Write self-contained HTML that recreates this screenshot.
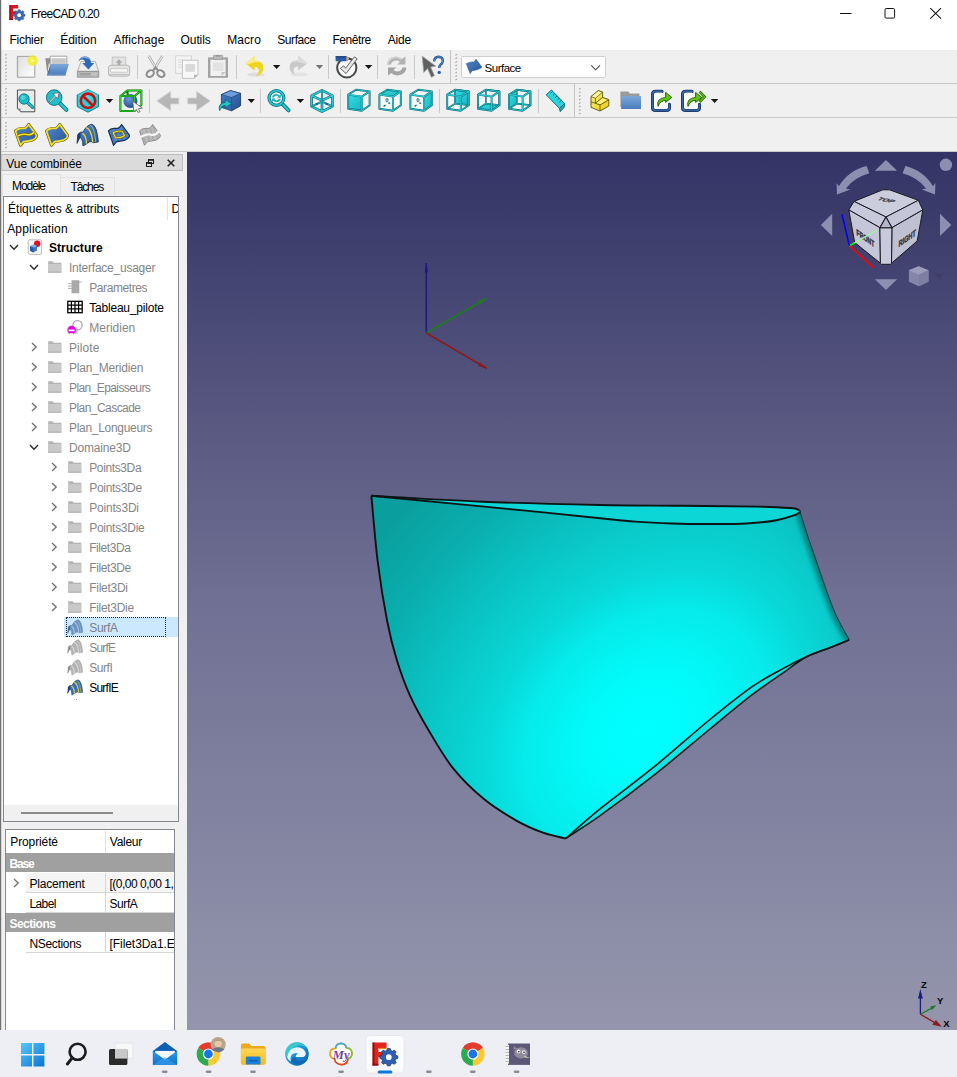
<!DOCTYPE html>
<html lang="fr">
<head>
<meta charset="utf-8">
<title>FreeCAD 0.20</title>
<style>
html,body{margin:0;padding:0;}
body{width:957px;height:1077px;overflow:hidden;position:relative;background:#f0f0f0;
 font-family:"Liberation Sans",sans-serif;font-size:12px;color:#000;}
.abs{position:absolute;}
.t{position:absolute;white-space:nowrap;line-height:14px;}
#title{left:0;top:0;width:957px;height:28px;background:#fff;}
#menu{left:0;top:28px;width:957px;height:22px;background:#fff;}

.hline{position:absolute;left:1px;width:956px;height:1px;background:#c9c9c9;}
.vsep{position:absolute;width:1px;background:#c6c6c6;}
.handle{position:absolute;width:2px;height:20px;
 background:repeating-linear-gradient(to bottom,#b0b0b0 0,#b0b0b0 1px,transparent 1px,transparent 3px);}
.ic{position:absolute;width:24px;height:24px;overflow:visible;}
.dd{position:absolute;width:0;height:0;border-left:3.5px solid transparent;border-right:3.5px solid transparent;border-top:4px solid #1a1a1a;}
#left{left:1px;top:152px;width:186px;height:878px;background:#f0f0f0;}
#view{left:187px;top:152px;width:770px;height:878px;background:linear-gradient(to bottom,#333365 0%,#6f6f93 50%,#9596ad 100%);}
#task{left:0;top:1030px;width:957px;height:47px;background:#eeeff5;}
.row{position:absolute;left:0;height:20px;white-space:nowrap;line-height:20px;font-size:12.2px;}
.g{color:#848484;}
.b{font-weight:bold;}
</style>
</head>
<body>
<!-- TITLE -->
<div id="title" class="abs">
<svg class="abs" style="left:8px;top:4px" width="18" height="18" viewBox="0 0 18 18"><path d="M1.4 1H10.2V4.4H5V7.2H8.6V10.4H5V16H1.4z" fill="#d8181c"/><path d="M1.4 1H2.6V16H1.4z" fill="#8c0c10"/><path d="M1.4 14.8H5V16H1.4z" fill="#8c0c10"/><g transform="translate(11.2 10.8)"><path d="M-1 -5.6H1L1.4 -4.2L2.6 -3.7L3.9 -4.5L5.2 -3.2L4.4 -1.9L4.9 -0.8L6.3 -0.4V1.4L4.9 1.8L4.4 3L5.2 4.2L3.9 5.5L2.6 4.8L1.4 5.3L1 6.6H-1L-1.4 5.3L-2.6 4.8L-3.9 5.5L-5.2 4.2L-4.4 3L-4.9 1.8L-6.3 1.4V-0.4L-4.9 -0.8L-4.4 -1.9L-5.2 -3.2L-3.9 -4.5L-2.6 -3.7L-1.4 -4.2z" fill="#3c6cb4" stroke="#1d3f78" stroke-width="0.5" transform="scale(0.92)"/><circle cx="0" cy="0.4" r="1.9" fill="#fff"/></g></svg>
<div class="t" style="left:30.7px;top:7.0px;font-size:12px;letter-spacing:-0.70px;">FreeCAD 0.20</div>
<svg class="abs" style="left:830px;top:0" width="127" height="28" viewBox="830 0 127 28"><path d="M840 13.5H851.5" stroke="#111" stroke-width="1"/><rect x="885" y="8.5" width="9.6" height="9.6" rx="1.2" fill="none" stroke="#111" stroke-width="1"/><path d="M930.3 8.2L941 18.6M941 8.2L930.3 18.6" stroke="#111" stroke-width="1.05"/></svg>
</div>
<div id="menu" class="abs">
<div class="t" style="left:9.5px;top:5.0px;font-size:12px;letter-spacing:-0.27px;">Fichier</div>
<div class="t" style="left:60.2px;top:5.0px;font-size:12px;letter-spacing:-0.05px;">Édition</div>
<div class="t" style="left:113.4px;top:5.0px;font-size:12px;letter-spacing:0.14px;">Affichage</div>
<div class="t" style="left:180.6px;top:5.0px;font-size:12px;letter-spacing:-0.11px;">Outils</div>
<div class="t" style="left:227.2px;top:5.0px;font-size:12px;letter-spacing:0.07px;">Macro</div>
<div class="t" style="left:277.3px;top:5.0px;font-size:12px;letter-spacing:-0.44px;">Surface</div>
<div class="t" style="left:332.5px;top:5.0px;font-size:12px;letter-spacing:-0.46px;">Fenêtre</div>
<div class="t" style="left:387.7px;top:5.0px;font-size:12px;letter-spacing:-0.17px;">Aide</div>
</div>
<!-- TOOLBARS -->
<div id="tb" class="abs" style="left:0;top:50px;width:957px;height:102px;">
 <div class="hline" style="top:33px;"></div>
 <div class="hline" style="top:67px;"></div>
 <div class="hline" style="top:101px;"></div>
<!--TB-ICONS-->
<svg class="abs" style="left:0;top:0;" width="957" height="102" viewBox="0 50 957 102"><defs>
<linearGradient id="pg" x1="0" y1="0" x2="1" y2="1"><stop offset="0" stop-color="#dedede"/><stop offset="1" stop-color="#ffffff"/></linearGradient>
<radialGradient id="yg"><stop offset="0" stop-color="#fffff0"/><stop offset="0.28" stop-color="#f8f330"/><stop offset="0.68" stop-color="#f2ec30" stop-opacity="0.85"/><stop offset="1" stop-color="#f0ea30" stop-opacity="0"/></radialGradient>
<linearGradient id="bf" x1="0" y1="0" x2="0" y2="1"><stop offset="0" stop-color="#7da7d9"/><stop offset="1" stop-color="#4a7fc0"/></linearGradient>
<linearGradient id="flag" x1="0" y1="0" x2="1" y2="1"><stop offset="0" stop-color="#4f86c9"/><stop offset="1" stop-color="#2a5596"/></linearGradient>
<linearGradient id="teal" x1="0" y1="0" x2="1" y2="1"><stop offset="0" stop-color="#35dde3"/><stop offset="1" stop-color="#17b4bf"/></linearGradient>
<linearGradient id="yel" x1="0" y1="0" x2="1" y2="1"><stop offset="0" stop-color="#fbf07a"/><stop offset="1" stop-color="#e6cc10"/></linearGradient>
<radialGradient id="sph" cx="0.4" cy="0.35" r="0.7"><stop offset="0" stop-color="#6a9ad8"/><stop offset="1" stop-color="#1f4a8c"/></radialGradient>
<linearGradient id="bcube" x1="0" y1="0" x2="1" y2="1"><stop offset="0" stop-color="#4d86cc"/><stop offset="1" stop-color="#234f90"/></linearGradient>
</defs>
<path d="M5.3 55.4l1.4 -1.2" stroke="#a3a3a3" stroke-width="1.1"/><path d="M5.3 58.9l1.4 -1.2" stroke="#a3a3a3" stroke-width="1.1"/><path d="M5.3 62.5l1.4 -1.2" stroke="#a3a3a3" stroke-width="1.1"/><path d="M5.3 66.0l1.4 -1.2" stroke="#a3a3a3" stroke-width="1.1"/><path d="M5.3 69.6l1.4 -1.2" stroke="#a3a3a3" stroke-width="1.1"/><path d="M5.3 73.1l1.4 -1.2" stroke="#a3a3a3" stroke-width="1.1"/><path d="M5.3 76.7l1.4 -1.2" stroke="#a3a3a3" stroke-width="1.1"/><path d="M5.3 80.2l1.4 -1.2" stroke="#a3a3a3" stroke-width="1.1"/>
<path d="M5.3 89.4l1.4 -1.2" stroke="#a3a3a3" stroke-width="1.1"/><path d="M5.3 92.9l1.4 -1.2" stroke="#a3a3a3" stroke-width="1.1"/><path d="M5.3 96.5l1.4 -1.2" stroke="#a3a3a3" stroke-width="1.1"/><path d="M5.3 100.0l1.4 -1.2" stroke="#a3a3a3" stroke-width="1.1"/><path d="M5.3 103.6l1.4 -1.2" stroke="#a3a3a3" stroke-width="1.1"/><path d="M5.3 107.1l1.4 -1.2" stroke="#a3a3a3" stroke-width="1.1"/><path d="M5.3 110.7l1.4 -1.2" stroke="#a3a3a3" stroke-width="1.1"/><path d="M5.3 114.2l1.4 -1.2" stroke="#a3a3a3" stroke-width="1.1"/>
<path d="M5.3 123.4l1.4 -1.2" stroke="#a3a3a3" stroke-width="1.1"/><path d="M5.3 126.9l1.4 -1.2" stroke="#a3a3a3" stroke-width="1.1"/><path d="M5.3 130.5l1.4 -1.2" stroke="#a3a3a3" stroke-width="1.1"/><path d="M5.3 134.1l1.4 -1.2" stroke="#a3a3a3" stroke-width="1.1"/><path d="M5.3 137.6l1.4 -1.2" stroke="#a3a3a3" stroke-width="1.1"/><path d="M5.3 141.2l1.4 -1.2" stroke="#a3a3a3" stroke-width="1.1"/><path d="M5.3 144.7l1.4 -1.2" stroke="#a3a3a3" stroke-width="1.1"/><path d="M5.3 148.2l1.4 -1.2" stroke="#a3a3a3" stroke-width="1.1"/>
<path d="M455.5 55.4l1.4 -1.2" stroke="#a3a3a3" stroke-width="1.1"/><path d="M455.5 58.9l1.4 -1.2" stroke="#a3a3a3" stroke-width="1.1"/><path d="M455.5 62.5l1.4 -1.2" stroke="#a3a3a3" stroke-width="1.1"/><path d="M455.5 66.0l1.4 -1.2" stroke="#a3a3a3" stroke-width="1.1"/><path d="M455.5 69.6l1.4 -1.2" stroke="#a3a3a3" stroke-width="1.1"/><path d="M455.5 73.1l1.4 -1.2" stroke="#a3a3a3" stroke-width="1.1"/><path d="M455.5 76.7l1.4 -1.2" stroke="#a3a3a3" stroke-width="1.1"/><path d="M455.5 80.2l1.4 -1.2" stroke="#a3a3a3" stroke-width="1.1"/>
<path d="M579.1 89.4l1.4 -1.2" stroke="#a3a3a3" stroke-width="1.1"/><path d="M579.1 92.9l1.4 -1.2" stroke="#a3a3a3" stroke-width="1.1"/><path d="M579.1 96.5l1.4 -1.2" stroke="#a3a3a3" stroke-width="1.1"/><path d="M579.1 100.0l1.4 -1.2" stroke="#a3a3a3" stroke-width="1.1"/><path d="M579.1 103.6l1.4 -1.2" stroke="#a3a3a3" stroke-width="1.1"/><path d="M579.1 107.1l1.4 -1.2" stroke="#a3a3a3" stroke-width="1.1"/><path d="M579.1 110.7l1.4 -1.2" stroke="#a3a3a3" stroke-width="1.1"/><path d="M579.1 114.2l1.4 -1.2" stroke="#a3a3a3" stroke-width="1.1"/>
<path d="M450.5 50.0V83.0" stroke="#c4c4c4" stroke-width="1"/>
<path d="M574.5 84.0V117.0" stroke="#c4c4c4" stroke-width="1"/>
<path d="M137.5 55.0V79.0" stroke="#c9c9c9" stroke-width="1"/>
<path d="M236.5 55.0V79.0" stroke="#c9c9c9" stroke-width="1"/>
<path d="M328.5 55.0V79.0" stroke="#c9c9c9" stroke-width="1"/>
<path d="M377.5 55.0V79.0" stroke="#c9c9c9" stroke-width="1"/>
<path d="M414.5 55.0V79.0" stroke="#c9c9c9" stroke-width="1"/>
<path d="M149.5 89.0V113.0" stroke="#c9c9c9" stroke-width="1"/>
<path d="M260.5 89.0V113.0" stroke="#c9c9c9" stroke-width="1"/>
<path d="M340.5 89.0V113.0" stroke="#c9c9c9" stroke-width="1"/>
<path d="M439.5 89.0V113.0" stroke="#c9c9c9" stroke-width="1"/>
<path d="M538.5 89.0V113.0" stroke="#c9c9c9" stroke-width="1"/>
<g transform="translate(15.0 55.0)" ><path d="M2 2.2H19.9V22.6H2z" fill="#8d8d8d" opacity="0.35"/><path d="M2.3 1.4H19.8V22.2H2.3z" fill="url(#pg)" stroke="#9b9b9b" stroke-width="0.9"/><path d="M3.8 3V21" stroke="#d5d5d5" stroke-width="0.6"/><circle cx="17.4" cy="5.6" r="6.2" fill="url(#yg)"/></g>
<g transform="translate(45.0 55.0)" ><path d="M0.4 3.2h4.6l1 1.4h9v4H3.8L2.4 19.6z" fill="#8e8e8e"/><path d="M5.2 1.2H21.8V12H5.2z" fill="#fff" stroke="#8d8d8d" stroke-width="0.8"/><path d="M6.4 3.2H20.8V9H6.4z" fill="#c8c8c8"/><path d="M5.9 9H23.9L20.6 19.7H2.1z" fill="url(#bf)"/><path d="M2.1 19.7H20.6L20.8 20.4H2z" fill="#2d5a9a"/><path d="M2.4 19.6L5.6 9.6 4.6 16z" fill="#555"/></g>
<g transform="translate(77.0 55.0)" ><path d="M4.2 6.4H18.2L21.8 16.4H0.4z" fill="#ececec" stroke="#a2a2a2" stroke-width="0.8"/><path d="M0.4 16.4H21.8V22.2H0.4z" fill="#b9b9b9" stroke="#8c8c8c" stroke-width="0.8"/><path d="M2.6 18h11.2v2.4H2.6z" fill="#a2a2a2"/><path d="M15 18v2.6M16.8 18v2.6M18.6 18v2.6" stroke="#cfcfcf" stroke-width="0.8"/><path d="M1.4 6.6Q2.6 1.4 8.4 1.4Q13.6 1.8 14.2 8H17.2L11.4 14.6L5.2 8H8.2Q8 5 5.2 4.6Q2.8 4.6 1.4 6.6z" fill="#2f68b4"/><path d="M1.4 6.6Q2.6 1.4 8.4 1.4Q12 1.8 13.4 5Q10 2.4 6 3Q3 3.6 1.4 6.6z" fill="#7fa8dc"/></g>
<g transform="translate(108.0 55.0)" ><path d="M4.2 2H17.8V11H4.2z" fill="#e2e2e2" stroke="#bdbdbd" stroke-width="0.8"/><path d="M11 4.2L14.2 7.4H12.4V10.4H9.6V7.4H7.8z" fill="#a8a8a8"/><rect x="0.5" y="10.2" width="21.2" height="11" rx="2.6" fill="#e4e4e2" stroke="#b2b2b2" stroke-width="0.9"/><path d="M2.6 13.6H19.6V16.2Q19.6 17.2 18.6 17.2H3.6Q2.6 17.2 2.6 16.2z" fill="#f7f7f5" stroke="#bcbcbc" stroke-width="0.7"/><path d="M1.4 19.6H20.8" stroke="#c2c2c2" stroke-width="1.2"/></g>
<g transform="translate(144.0 55.0)" ><path d="M4.6 1L12.6 14M18.4 1L10.4 14" stroke="#a9a9a9" stroke-width="2.6" fill="none"/><path d="M4.6 1L12.6 14M18.4 1L10.4 14" stroke="#ececec" stroke-width="1.2" fill="none"/><ellipse cx="6.2" cy="18.6" rx="4" ry="3" transform="rotate(-35 6.2 18.6)" fill="none" stroke="#8e8e8e" stroke-width="2"/><ellipse cx="16.8" cy="18.6" rx="4" ry="3" transform="rotate(35 16.8 18.6)" fill="none" stroke="#8e8e8e" stroke-width="2"/><path d="M9 15.6L11.5 12.4L14 15.6" stroke="#8e8e8e" stroke-width="2" fill="none"/></g>
<g transform="translate(175.0 55.0)" ><path d="M0.6 0.8H16.4V18.4H0.6z" fill="#f4f4f4" stroke="#cdcdcd" stroke-width="0.8"/><path d="M3 5h5M3 7.4h5M3 9.8h5M3 12.2h5" stroke="#d6d6d6" stroke-width="0.8"/><path d="M7.4 5.2H23V19.8L19 23.4H7.4z" fill="#f8f8f8" stroke="#bdbdbd" stroke-width="0.9"/><path d="M10.4 9H20V16.8H10.4z" fill="#d9d9d9"/><path d="M23 19.8H19V23.4z" fill="#b5b5b5"/></g>
<g transform="translate(207.0 55.0)" ><path d="M1 2.4H21V22.8H1z" fill="#a3a3a3"/><path d="M3.4 4.6H18.6V21H3.4z" fill="#f1f1f1"/><path d="M6 7.4H16.4V16H6z" fill="#e2e2e2"/><path d="M6.6 0.4H15.6V4.6H6.6z" fill="#b9b9b9" stroke="#9b9b9b" stroke-width="0.7"/><path d="M9 0H13.4V1.6H9z" fill="#999"/><path d="M18.6 17H14.6V21z" fill="#c2c2c2"/></g>
<g transform="translate(245.0 55.0)" ><ellipse cx="11" cy="19.6" rx="9" ry="2" fill="#000" opacity="0.08"/><path d="M0.6 8.6L9.6 1V5.4Q18.6 5.6 18.4 13.4Q18 19 11 21.2Q14.8 17.6 13.6 14.2Q12.6 11.6 9.6 11.8V15.8z" fill="#eed51c"/><path d="M0.6 8.6L9.6 1V5.4Q14 5.4 16.4 7.6Q12 6.4 9 7.2L2.6 9.6z" fill="#f7ec8a"/></g>
<path d="M272.9 65.0h7.4l-3.7 4.1z" fill="#151515"/>
<g transform="translate(289.0 55.0)" ><ellipse cx="10" cy="19.6" rx="9" ry="2" fill="#000" opacity="0.05"/><path d="M18.2 8.2L9.2 0.8V5.2Q0.4 5.4 0.6 13Q1 18 6.4 19.6Q3.6 16.6 5 13.6Q6.2 11.4 9.2 11.6V15.6z" fill="#c9c9c9"/><path d="M18.2 8.2L9.2 0.8V5.2Q5 5.2 2.6 7.6Q7 6.2 10 7L16.4 9.2z" fill="#dcdcdc"/></g>
<path d="M315.8 65.0h7.4l-3.7 4.1z" fill="#757575"/>
<g transform="translate(335.0 55.0)" ><circle cx="11.8" cy="12.8" r="9.6" fill="#fafafa" stroke="#454949" stroke-width="2"/><path d="M5.4 13.4L8.6 10.8L10.6 13.2L19.4 1.8L22.2 3.8L11 18.6z" fill="#e6e6e6" stroke="#555" stroke-width="0.9"/><path d="M0.6 1.2H11.4L15.4 3.6L11.4 6.2H0.6z" fill="#2a5fa5"/><path d="M0.6 1.2H11.4V2.6H0.6z" fill="#1b3f78"/><path d="M11.4 1.2L15.4 3.6L11.4 6.2z" fill="#c9a77a"/><path d="M14 2.8L15.6 3.6L14 4.6z" fill="#222"/></g>
<path d="M364.9 65.0h7.4l-3.7 4.1z" fill="#151515"/>
<g transform="translate(386.0 55.0)" ><path d="M1 9.6Q1.6 2 10 1.6Q14 1.8 16 4L19.4 1.4V9.6H11L14 7Q12.6 5.6 10 5.6Q5.4 6 5 9.6z" fill="#b3b3b3"/><path d="M20.4 12.4Q19.8 20 11.4 20.4Q7.4 20.2 5.4 18L2 20.6V12.4H10.4L7.4 15Q8.8 16.4 11.4 16.4Q16 16 16.4 12.4z" fill="#a4a4a4"/><path d="M1 9.6Q1.6 2 10 1.6Q14 1.8 16 4L15 4.8Q12.6 3 10 3Q3.6 3.4 2.4 9.6z" fill="#d5d5d5"/></g>
<g transform="translate(421.0 55.0)" ><path d="M1.2 1.2L14.8 11.2L9.6 12L13.4 20.6L10.4 22.2L6.6 13.6L2.8 17.4z" fill="#5e615f" stroke="#9a9d9a" stroke-width="0.8"/><path d="M13.2 6.4Q13.4 2 17.6 1.8Q21.8 2 21.8 5.8Q21.8 8.2 19.4 9.8Q18.2 10.8 18.2 13" fill="none" stroke="#1d4f94" stroke-width="2.4"/><path d="M13.2 6.4Q13.4 2 17.6 1.8Q21.8 2 21.8 5.8Q21.8 8.2 19.4 9.8Q18.2 10.8 18.2 13" fill="none" stroke="#5b8ed0" stroke-width="1"/><circle cx="18.2" cy="17.4" r="1.7" fill="#2a5fa5"/></g>
<rect x="461.5" y="56.5" width="144" height="21" rx="1" fill="#fff" stroke="#cfcfcf" stroke-width="1"/>
<g transform="translate(466.0 58.0)" ><path d="M0.4 6Q4 3.6 8.6 4.2L10.6 1.2L16.8 9.8Q13 13 6.4 13.4L4.4 16.4z" fill="url(#flag)" stroke="#27508e" stroke-width="0.6" transform="scale(0.95)"/></g>
<path d="M591.2 65.4L595.6 69.8L600 65.4" fill="none" stroke="#444" stroke-width="1.1"/>
<g transform="translate(15.0 89.0)" ><path d="M2.4 1H19.8V22.8H5.6L2.4 19.6z" fill="#e9ece6" stroke="#3c3c3c" stroke-width="0.9"/><path d="M2.4 19.6H5.6V22.8z" fill="#8c8c8c"/><path d="M11 12L17.6 18.4" stroke="#0b6a75" stroke-width="3.2" stroke-linecap="round"/><path d="M11 12L17.6 18.4" stroke="#25c3cd" stroke-width="1.8" stroke-linecap="round"/><circle cx="9" cy="10" r="5.2" fill="#1fb9c4" stroke="#0b6a75" stroke-width="0.8"/><circle cx="8" cy="8.6" r="2.4" fill="#5fe0e6" opacity="0.7"/></g>
<g transform="translate(45.0 89.0)" ><path d="M14.6 14L21.4 20.8" stroke="#0b6a75" stroke-width="4" stroke-linecap="round"/><path d="M14.6 14L21.4 20.8" stroke="#27c7d1" stroke-width="2.4" stroke-linecap="round"/><circle cx="9.2" cy="8.6" r="7.8" fill="#21c1cb" stroke="#0b6a75" stroke-width="0.9"/><path d="M4.4 12.2L10 6.6L8 4.6L14 3.6L13 9.6L11 7.6L5.4 13.2z" fill="#f4f4f4" stroke="#555" stroke-width="0.7"/></g>
<g transform="translate(76.0 89.0)" ><path d="M12 0.6L22.6 6V17.6L12 23.2L1.2 17.6V6z" fill="#2bcfd8" stroke="#0b6a75" stroke-width="0.9"/><path d="M12 0.6L22.6 6L12 11.6L1.2 6z" fill="#4fe2e8" opacity="0.6"/><circle cx="12" cy="11.8" r="7.2" fill="none" stroke="#c90f0f" stroke-width="2.6"/><path d="M6.8 6.8L17.2 17" stroke="#c90f0f" stroke-width="2.6"/></g>
<path d="M105.8 99.0h7.4l-3.7 4.1z" fill="#151515"/>
<g transform="translate(119.0 89.0)" ><circle cx="11.4" cy="12" r="7" fill="url(#sph)"/><path d="M1.4 7H15.6V22H1.4zM1.4 7L8.6 1.4H22.4L15.6 7M22.4 1.4V16L15.6 22M8.6 1.4V7" fill="none" stroke="#0b7a0b" stroke-width="2.0" stroke-linejoin="round"/><path d="M1.4 7H15.6V22H1.4zM1.4 7L8.6 1.4H22.4L15.6 7M22.4 1.4V16L15.6 22" fill="none" stroke="#2ee02e" stroke-width="0.9" stroke-linejoin="round"/><path d="M13.8 13.4L23.4 20.4L19.4 20.8L21 24L19 24.6L17.4 21.6L14.8 24z" fill="#f2f2f2" stroke="#666" stroke-width="0.8" transform="translate(0 -1.2)"/></g>
<g transform="translate(156.0 89.0)" ><path d="M0.8 11.9L14.6 2.4V9.1H22.8V14.9H14.6V21.6z" fill="#b6b6b6" stroke="#cfcfcf" stroke-width="0.8"/></g>
<g transform="translate(187.0 89.0)" ><path d="M23.3 11.9L9.6 2.4V9.1H0.8V14.9H9.6V21.6z" fill="#b6b6b6" stroke="#cfcfcf" stroke-width="0.8"/></g>
<g transform="translate(218.0 89.0)" ><path d="M3.4 5.6L12.4 1.6L22.6 4.4V16.8L13.6 21.8L3.4 18.4z" fill="url(#bcube)" stroke="#16305c" stroke-width="0.8"/><path d="M3.4 5.6L12.4 1.6L22.6 4.4L13.6 8.6z" fill="#6d9fdc" stroke="#16305c" stroke-width="0.6"/><path d="M13.6 8.6V21.8" stroke="#16305c" stroke-width="0.6"/><path d="M3.4 5.6L13.6 8.6V21.8L3.4 18.4z" fill="#3a6fb5" opacity="0.6"/><path d="M1.6 21.6Q-0.4 14.6 7.2 13.2V10.4L13.6 14.6L7.2 19V16.2Q3.4 16.6 1.6 21.6z" fill="#25c3cd" stroke="#0b5a64" stroke-width="0.8"/></g>
<path d="M247.6 99.0h7.4l-3.7 4.1z" fill="#151515"/>
<g transform="translate(267.0 89.0)" ><path d="M15 14.6L21.6 21.4" stroke="#0b6a75" stroke-width="3.8" stroke-linecap="round"/><path d="M15 14.6L21.6 21.4" stroke="#27c7d1" stroke-width="2.2" stroke-linecap="round"/><circle cx="9.4" cy="9" r="7.4" fill="#f0f0f0" stroke="#0b6a75" stroke-width="3.2"/><circle cx="9.4" cy="9" r="7.4" fill="none" stroke="#27c7d1" stroke-width="1.8"/><path d="M5 8.4Q5.6 5 9.4 5Q11.4 5.2 12.4 6.4L13.8 5.2V8.8H10.2L11.4 7.6Q10.6 6.8 9.4 6.8Q7.2 7 6.8 8.4zM13.8 9.8Q13.2 13.2 9.4 13.2Q7.4 13 6.4 11.8L5 13V9.4H8.6L7.4 10.6Q8.2 11.4 9.4 11.4Q11.6 11.2 12 9.8z" fill="#1fb0bb"/></g>
<path d="M296.7 99.0h7.4l-3.7 4.1z" fill="#151515"/>
<g transform="translate(310.0 89.0)" ><path d="M12 1.4L22.4 6.6V17.4L12 22.6L1.6 17.4V6.6zM1.6 6.6L12 11.4L22.4 6.6M12 11.4V22.6" fill="none" stroke="#0b6a75" stroke-width="2.6" stroke-linejoin="round"/><path d="M12 1.4L22.4 6.6V17.4L12 22.6L1.6 17.4V6.6zM1.6 6.6L12 11.4L22.4 6.6M12 11.4V22.6" fill="none" stroke="#2bd0d9" stroke-width="1.3" stroke-linejoin="round"/><path d="M12 1.4V11.4M12 12.6L1.6 17.4M12 12.6L22.4 17.4" fill="none" stroke="#0b6a75" stroke-width="1.8" stroke-linejoin="round"/><path d="M12 1.4V11.4M12 12.6L1.6 17.4M12 12.6L22.4 17.4" fill="none" stroke="#2bd0d9" stroke-width="0.9" stroke-linejoin="round"/><path d="M5.6 15.6l2.4 -1M15.6 14.6l2.4 1" stroke="#0b6a75" stroke-width="1.6"/></g>
<g transform="translate(347.4 89.0)" ><path d="M0.8 5.6L8.6 0.8L22.2 2.4L22.2 16.2L14.4 21.8L0.8 19.8z" fill="#f7f7f7"/><path d="M0.8 5.6L14.4 7.6L14.4 21.8L0.8 19.8z" fill="url(#teal)"/><path d="M0.8 5.6L14.4 7.6L14.4 21.8L0.8 19.8z M0.8 5.6L8.6 0.8L22.2 2.4L14.4 7.6z M14.4 7.6L22.2 2.4L22.2 16.2L14.4 21.8z" fill="none" stroke="#0b6a75" stroke-width="1.9" stroke-linejoin="round"/><path d="M0.8 5.6L14.4 7.6L14.4 21.8L0.8 19.8z M0.8 5.6L8.6 0.8L22.2 2.4L14.4 7.6z M14.4 7.6L22.2 2.4L22.2 16.2L14.4 21.8z" fill="none" stroke="#2bd0d9" stroke-width="0.8" stroke-linejoin="round"/></g>
<g transform="translate(378.6 89.0)" ><path d="M0.8 5.6L8.6 0.8L22.2 2.4L22.2 16.2L14.4 21.8L0.8 19.8z" fill="#f7f7f7"/><path d="M0.8 5.6L8.6 0.8L22.2 2.4L14.4 7.6z" fill="url(#teal)"/><path d="M0.8 5.6L14.4 7.6L14.4 21.8L0.8 19.8z M0.8 5.6L8.6 0.8L22.2 2.4L14.4 7.6z M14.4 7.6L22.2 2.4L22.2 16.2L14.4 21.8z" fill="none" stroke="#0b6a75" stroke-width="1.9" stroke-linejoin="round"/><path d="M0.8 5.6L14.4 7.6L14.4 21.8L0.8 19.8z M0.8 5.6L8.6 0.8L22.2 2.4L14.4 7.6z M14.4 7.6L22.2 2.4L22.2 16.2L14.4 21.8z" fill="none" stroke="#2bd0d9" stroke-width="0.8" stroke-linejoin="round"/><ellipse cx="8.4" cy="11.2" rx="1" ry="1.8" fill="none" stroke="#0b6a75" stroke-width="0.9"/><path d="M5 17.4l2 -1.4M9.6 14.2h2" stroke="#0b6a75" stroke-width="1.3"/></g>
<g transform="translate(409.6 89.0)" ><path d="M0.8 5.6L8.6 0.8L22.2 2.4L22.2 16.2L14.4 21.8L0.8 19.8z" fill="#f7f7f7"/><path d="M14.4 7.6L22.2 2.4L22.2 16.2L14.4 21.8z" fill="url(#teal)"/><path d="M0.8 5.6L14.4 7.6L14.4 21.8L0.8 19.8z M0.8 5.6L8.6 0.8L22.2 2.4L14.4 7.6z M14.4 7.6L22.2 2.4L22.2 16.2L14.4 21.8z" fill="none" stroke="#0b6a75" stroke-width="1.9" stroke-linejoin="round"/><path d="M0.8 5.6L14.4 7.6L14.4 21.8L0.8 19.8z M0.8 5.6L8.6 0.8L22.2 2.4L14.4 7.6z M14.4 7.6L22.2 2.4L22.2 16.2L14.4 21.8z" fill="none" stroke="#2bd0d9" stroke-width="0.8" stroke-linejoin="round"/><ellipse cx="8.4" cy="11.2" rx="1" ry="1.8" fill="none" stroke="#0b6a75" stroke-width="0.9"/><path d="M5 17.4l2 -1.4M9.6 14.2h2" stroke="#0b6a75" stroke-width="1.3"/></g>
<g transform="translate(446.4 89.0)" ><path d="M0.8 5.6L8.6 0.8L22.2 2.4L22.2 16.2L14.4 21.8L0.8 19.8z" fill="#f7f7f7"/><path d="M8.6 0.8L22.2 2.4L22.2 16.2L8.6 14.6z" fill="url(#teal)"/><path d="M8.6 0.8L22.2 2.4L22.2 16.2L8.6 14.6z M0.8 19.8L8.6 14.6" fill="none" stroke="#0b6a75" stroke-width="1.7" stroke-linejoin="round"/><path d="M8.6 0.8L22.2 2.4L22.2 16.2L8.6 14.6z M0.8 19.8L8.6 14.6" fill="none" stroke="#2bd0d9" stroke-width="0.7" stroke-linejoin="round"/><path d="M0.8 5.6L14.4 7.6L14.4 21.8L0.8 19.8z M0.8 5.6L8.6 0.8L22.2 2.4L14.4 7.6z M14.4 7.6L22.2 2.4L22.2 16.2L14.4 21.8z" fill="none" stroke="#0b6a75" stroke-width="1.9" stroke-linejoin="round"/><path d="M0.8 5.6L14.4 7.6L14.4 21.8L0.8 19.8z M0.8 5.6L8.6 0.8L22.2 2.4L14.4 7.6z M14.4 7.6L22.2 2.4L22.2 16.2L14.4 21.8z" fill="none" stroke="#2bd0d9" stroke-width="0.8" stroke-linejoin="round"/></g>
<g transform="translate(477.2 89.0)" ><path d="M0.8 5.6L8.6 0.8L22.2 2.4L22.2 16.2L14.4 21.8L0.8 19.8z" fill="#f7f7f7"/><path d="M0.8 19.8L8.6 14.6L22.2 16.2L14.4 21.8z" fill="url(#teal)"/><path d="M8.6 0.8L22.2 2.4L22.2 16.2L8.6 14.6z M0.8 19.8L8.6 14.6" fill="none" stroke="#0b6a75" stroke-width="1.7" stroke-linejoin="round"/><path d="M8.6 0.8L22.2 2.4L22.2 16.2L8.6 14.6z M0.8 19.8L8.6 14.6" fill="none" stroke="#2bd0d9" stroke-width="0.7" stroke-linejoin="round"/><path d="M0.8 5.6L14.4 7.6L14.4 21.8L0.8 19.8z M0.8 5.6L8.6 0.8L22.2 2.4L14.4 7.6z M14.4 7.6L22.2 2.4L22.2 16.2L14.4 21.8z" fill="none" stroke="#0b6a75" stroke-width="1.9" stroke-linejoin="round"/><path d="M0.8 5.6L14.4 7.6L14.4 21.8L0.8 19.8z M0.8 5.6L8.6 0.8L22.2 2.4L14.4 7.6z M14.4 7.6L22.2 2.4L22.2 16.2L14.4 21.8z" fill="none" stroke="#2bd0d9" stroke-width="0.8" stroke-linejoin="round"/></g>
<g transform="translate(508.2 89.0)" ><path d="M0.8 5.6L8.6 0.8L22.2 2.4L22.2 16.2L14.4 21.8L0.8 19.8z" fill="#f7f7f7"/><path d="M0.8 5.6L8.6 0.8L8.6 14.6L0.8 19.8z" fill="url(#teal)"/><path d="M8.6 0.8L22.2 2.4L22.2 16.2L8.6 14.6z M0.8 19.8L8.6 14.6" fill="none" stroke="#0b6a75" stroke-width="1.7" stroke-linejoin="round"/><path d="M8.6 0.8L22.2 2.4L22.2 16.2L8.6 14.6z M0.8 19.8L8.6 14.6" fill="none" stroke="#2bd0d9" stroke-width="0.7" stroke-linejoin="round"/><path d="M0.8 5.6L14.4 7.6L14.4 21.8L0.8 19.8z M0.8 5.6L8.6 0.8L22.2 2.4L14.4 7.6z M14.4 7.6L22.2 2.4L22.2 16.2L14.4 21.8z" fill="none" stroke="#0b6a75" stroke-width="1.9" stroke-linejoin="round"/><path d="M0.8 5.6L14.4 7.6L14.4 21.8L0.8 19.8z M0.8 5.6L8.6 0.8L22.2 2.4L14.4 7.6z M14.4 7.6L22.2 2.4L22.2 16.2L14.4 21.8z" fill="none" stroke="#2bd0d9" stroke-width="0.8" stroke-linejoin="round"/></g>
<g transform="translate(545.0 89.0)" ><path d="M1.2 5.8L6.4 1L19.6 14.6L14.4 19.4z" fill="#2bd3db" stroke="#0b6a75" stroke-width="0.9"/><path d="M14.4 19.4L19.6 14.6V17.8L15.2 22.8z" fill="#19a9b4" stroke="#0b6a75" stroke-width="0.8"/><path d="M7.6 2.4l-2 1.9M9.8 4.6l-1.6 1.5M12 6.9l-2 1.9M14.2 9.2l-1.6 1.5M16.4 11.4l-2 1.9" stroke="#0b5a64" stroke-width="0.9"/></g>
<g transform="translate(590.0 89.0)" ><path d="M1 7.6L8.4 1.6L12.6 3.2V8.6L18.8 10.8V17L10 22L1 18.4z" fill="url(#yel)" stroke="#5e5204" stroke-width="0.9" stroke-linejoin="round"/><path d="M1 7.6L8.4 1.6L12.6 3.2L5.4 9.2z" fill="#fdf6a0" stroke="#5e5204" stroke-width="0.7"/><path d="M5.4 9.2V14.2L10 15.8L18.8 10.8L12.6 8.6L5.4 14.2M1 13L5.4 14.2M10 15.8V22" fill="none" stroke="#5e5204" stroke-width="0.8"/><path d="M5.4 14.2L12.6 8.6L18.8 10.8L10 15.8z" fill="#fbf07a" stroke="#5e5204" stroke-width="0.7"/></g>
<g transform="translate(620.0 89.0)" ><path d="M0.4 2.4H8.4L9.8 4.4H19.4V18H0.4z" fill="#9a9a9a"/><path d="M1.2 7H21V19.6H1.2z" fill="url(#bf)"/><path d="M1.2 19H21V19.8H1.2z" fill="#3f6fb0"/></g>
<g transform="translate(651.0 89.0)" ><path d="M11 2.4H4.6Q1.6 2.4 1.6 5.4V18.4Q1.6 21.4 4.6 21.4H15.4Q18.4 21.4 18.4 18.4V15.4" fill="none" stroke="#16305c" stroke-width="3.2" stroke-linecap="round"/><path d="M11 3.6H5Q3 3.6 3 5.6V18.2Q3 20 5 20H15Q17 20 17 18.2V15.4z" fill="#fbfbfb"/><path d="M11 2.4H4.6Q1.6 2.4 1.6 5.4V18.4Q1.6 21.4 4.6 21.4H15.4Q18.4 21.4 18.4 18.4V15.4" fill="none" stroke="#3465a4" stroke-width="1.7" stroke-linecap="round"/><path d="M7 17.4Q5 9.4 14.6 8.4V3.4L20.8 8.4L14.6 13.4V11.4Q9.4 11.4 7 17.4z" fill="#63c312" stroke="#1e5a06" stroke-width="0.9" stroke-linejoin="round"/></g>
<g transform="translate(681.0 89.0)" ><path d="M11 2.4H4.6Q1.6 2.4 1.6 5.4V18.4Q1.6 21.4 4.6 21.4H15.4Q18.4 21.4 18.4 18.4V15.4" fill="none" stroke="#16305c" stroke-width="3.2" stroke-linecap="round"/><path d="M11 3.6H5Q3 3.6 3 5.6V18.2Q3 20 5 20H15Q17 20 17 18.2V15.4z" fill="#fbfbfb"/><path d="M11 2.4H4.6Q1.6 2.4 1.6 5.4V18.4Q1.6 21.4 4.6 21.4H15.4Q18.4 21.4 18.4 18.4V15.4" fill="none" stroke="#3465a4" stroke-width="1.7" stroke-linecap="round"/><path d="M7 17.4Q5 9.4 14.6 8.4V3.4L20.8 8.4L14.6 13.4V11.4Q9.4 11.4 7 17.4z" fill="#63c312" stroke="#1e5a06" stroke-width="0.9" stroke-linejoin="round"/><path d="M18.6 2.6L23.6 7.8L18.6 13" fill="none" stroke="#1e5a06" stroke-width="2.6"/><path d="M18.6 2.6L23.6 7.8L18.6 13" fill="none" stroke="#63c312" stroke-width="1.3"/></g>
<path d="M710.9 99.0h7.4l-3.7 4.1z" fill="#151515"/>
<g transform="translate(15.0 123.0)" ><path d="M0.5 8Q2.5 5.6 6 5.4L10 5.4Q12.4 4.4 13.6 1.5L21.4 12.2Q22 14.8 17.1 17.1Q12 18.2 8.5 18.6L5.5 22.3z" fill="url(#flag)" stroke="#6b5f06" stroke-width="3" stroke-linejoin="round"/><path d="M0.5 8Q2.5 5.6 6 5.4L10 5.4Q12.4 4.4 13.6 1.5L21.4 12.2Q22 14.8 17.1 17.1Q12 18.2 8.5 18.6L5.5 22.3z" fill="url(#flag)" stroke="#f6e22a" stroke-width="1.6" stroke-linejoin="round"/><path d="M2.4 13.2Q7 10.4 12 11.6Q16.6 12.6 19 9" fill="none" stroke="#6b5f06" stroke-width="2.8"/><path d="M2.4 13.2Q7 10.4 12 11.6Q16.6 12.6 19 9" fill="none" stroke="#f6e22a" stroke-width="1.5"/></g>
<g transform="translate(46.0 123.0)" ><path d="M0.5 8Q2.5 5.6 6 5.4L10 5.4Q12.4 4.4 13.6 1.5L21.4 12.2Q22 14.8 17.1 17.1Q12 18.2 8.5 18.6L5.5 22.3z" fill="url(#flag)" stroke="#6b5f06" stroke-width="3" stroke-linejoin="round"/><path d="M0.5 8Q2.5 5.6 6 5.4L10 5.4Q12.4 4.4 13.6 1.5L21.4 12.2Q22 14.8 17.1 17.1Q12 18.2 8.5 18.6L5.5 22.3z" fill="url(#flag)" stroke="#f6e22a" stroke-width="1.6" stroke-linejoin="round"/></g>
<g transform="translate(76.0 123.0)" ><path d="M1 20.4L1.8 11.4Q4.6 8 7 9.2Q10.4 2 15.8 1.2Q21 2.4 22.4 19L17 19.8Q15.6 18 13.4 19L7 23Q6.4 15.6 4.6 14.6Q3 15.6 1 20.4z" fill="url(#flag)" stroke="#16305c" stroke-width="0.8" stroke-linejoin="round"/><path d="M1 20.4L1.8 11.4Q3.4 9.6 4.6 9.4L4.6 14.6Q3 15.6 1 20.4z" fill="#1d3f78"/><path d="M6.4 10.4Q10 12 10.6 20.6M10.2 4.6Q15.4 6 16.8 19.4" fill="none" stroke="#f0dc3a" stroke-width="1.2"/><path d="M13.6 2Q18.6 4 19.8 19.2" fill="none" stroke="#f0dc3a" stroke-width="0.9" opacity="0.7"/></g>
<g transform="translate(108.0 123.0)" ><path d="M0.5 8Q2.5 5.6 6 5.4L10 5.4Q12.4 4.4 13.6 1.5L21.4 12.2Q22 14.8 17.1 17.1Q12 18.2 8.5 18.6L5.5 22.3z" fill="#5088cc" stroke="#16305c" stroke-width="1.2" stroke-linejoin="round"/><path d="M3 9L6.4 20M7 6L10.4 18.2M11.4 5.6L14.6 17.4M13.6 2L19 15.6M2 13.4Q8 9.6 19.6 10.4" stroke="#1d3f78" stroke-width="0.6" fill="none" opacity="0.55"/><path d="M5.2 9.8Q8.6 7.6 14 8.2L16.6 12.8Q13 15 7.6 15z" fill="none" stroke="#6b5f06" stroke-width="2.2" stroke-linejoin="round"/><path d="M5.2 9.8Q8.6 7.6 14 8.2L16.6 12.8Q13 15 7.6 15z" fill="none" stroke="#f6e22a" stroke-width="1.1" stroke-linejoin="round"/></g>
<g transform="translate(139.0 123.0)" ><path d="M0.5 8Q2.5 5.6 6 5.4L10 5.4Q12.4 4.4 13.6 1.5L21.4 12.2Q22 14.8 17.1 17.1Q12 18.2 8.5 18.6L5.5 22.3z" fill="#b9b9b9" stroke="#8f8f8f" stroke-width="1" stroke-linejoin="round"/><path d="M3 9L6.4 20M7 6L10.4 18.2M11.4 5.6L14.6 17.4M13.6 2L19 15.6" stroke="#9a9a9a" stroke-width="0.7" fill="none"/><path d="M1.6 14Q7 10.4 12 11.6Q17 12.6 19.6 8.4" fill="none" stroke="#f4f4f4" stroke-width="2.2"/></g></svg><div class="t" style="left:484.6px;top:11.1px;font-size:11.5px;letter-spacing:-0.51px;">Surface</div>
<!--/TB-ICONS-->
</div>
<!-- LEFT PANEL -->
<div id="left" class="abs">
<!--LEFT-->
<div class="abs" style="left:0.0px;top:2.0px;width:182.0px;height:17.0px;background:#dbdbdb;border:1px solid #bcbcbc;box-sizing:border-box;"></div>
<div class="t" style="left:5.3px;top:4.8px;font-size:12px;letter-spacing:-0.05px;">Vue combinée</div>
<svg class="abs" style="left:144.0px;top:6.0px;" width="10" height="10" viewBox="0 0 10 10"><path d="M3.5 1.5h5v4h-5z M1.5 4.5h5v4h-5z" fill="#dbdbdb" stroke="#222" stroke-width="1.1"/><path d="M3.5 2h5" stroke="#222" stroke-width="1.6"/><path d="M1.5 5h5" stroke="#222" stroke-width="1.6"/></svg>
<svg class="abs" style="left:165.0px;top:6.0px;" width="10" height="10" viewBox="0 0 10 10"><path d="M1.7 1.7L8.3 8.3M8.3 1.7L1.7 8.3" stroke="#222" stroke-width="1.6" fill="none"/></svg>
<div class="abs" style="left:1.0px;top:22.0px;width:59.0px;height:23.0px;background:#f3f3f3;border:1px solid #e2e2e2;border-bottom:none;box-sizing:border-box;"></div>
<div class="abs" style="left:60.0px;top:25.0px;width:54.0px;height:18.0px;background:#f0f0f0;border:1px solid #e2e2e2;border-left:none;border-bottom:none;box-sizing:border-box;"></div>
<div class="t" style="left:11.1px;top:26.6px;font-size:12px;letter-spacing:-1.09px;">Modèle</div>
<div class="t" style="left:69.5px;top:27.6px;font-size:12px;letter-spacing:-1.13px;">Tâches</div>
<div class="abs" style="left:2.0px;top:44.0px;width:176.0px;height:626.0px;background:#fff;border:1px solid #828790;box-sizing:border-box;"></div>
<div class="abs" style="left:165.5px;top:45.0px;width:1.0px;height:22.5px;background:#e2e2e2;"></div>
<div class="t" style="left:7.0px;top:49.8px;font-size:12px;letter-spacing:0.03px;">Étiquettes &amp; attributs</div>
<div class="t" style="left:170.4px;top:49.8px;font-size:12px;width:6.4px;overflow:hidden;">D</div>
<div class="t" style="left:6.2px;top:69.8px;font-size:12px;letter-spacing:0.17px;">Application</div>
<div class="abs" style="left:3.0px;top:653.0px;width:174.0px;height:16.0px;background:#f0f0f0;"></div>
<div class="abs" style="left:20.0px;top:660.0px;width:92.0px;height:2.0px;background:#8b8b8b;"></div>
<div class="abs" style="left:63.0px;top:465.0px;width:114.0px;height:20.0px;background:#cce8ff;"></div>
<div class="abs" style="left:65.0px;top:465.0px;width:100.0px;height:20.0px;border:1px dotted #222;box-sizing:border-box;"></div>
<svg class="abs" style="left:6.7px;top:90.3px;" width="12" height="10" viewBox="0 0 12 10"><path d="M2 3L6 7.2L10 3" fill="none" stroke="#262626" stroke-width="1.3"/></svg>
<svg class="abs" style="left:26.0px;top:87.0px;" width="16" height="16" viewBox="0 0 16 16"><rect x="1.2" y="0.8" width="13.4" height="14.6" rx="1.5" fill="#f6f6f6" stroke="#b5b5b5" stroke-width="0.9"/><circle cx="10.2" cy="4.8" r="3.2" fill="#e0101c"/><path d="M3 7.2L7 5.6l3 1.4v4.6L6.4 13.4 3 11.8z" fill="#3b78c2"/><path d="M3 7.2L6.4 8.8 10 7 7 5.6z" fill="#7fb0e8"/><path d="M6.4 8.8v4.6L3 11.8V7.2z" fill="#2a5a9a"/></svg>
<div class="t" style="left:47.9px;top:88.6px;font-size:12px;letter-spacing:0.06px;font-weight:bold;">Structure</div>
<svg class="abs" style="left:26.8px;top:110.3px;" width="12" height="10" viewBox="0 0 12 10"><path d="M2 3L6 7.2L10 3" fill="none" stroke="#262626" stroke-width="1.3"/></svg>
<svg class="abs" style="left:46.0px;top:107.0px;" width="16" height="16" viewBox="0 0 16 16"><path d="M1.2 2.2h4.3l1.2 1.6h7.6v9.8H1.2z" fill="#b3b3b3"/><path d="M1.2 5h13.1v8.6H1.2z" fill="#c9c9c9"/><path d="M1.2 12.6h13.1v1H1.2z" fill="#b0b0b0"/></svg>
<div class="t" style="left:68.0px;top:108.6px;font-size:12px;letter-spacing:-0.24px;color:#858585;">Interface_usager</div>
<svg class="abs" style="left:66.0px;top:127.0px;" width="16" height="16" viewBox="0 0 16 16"><path d="M4.5 1.2h7.8v1.3h2.2v1H12.3v10.8H4.5z" fill="#a9a9a9"/><path d="M1 4.6h3.5M1 7h3.5M1 9.4h3.5" stroke="#a9a9a9" stroke-width="1"/></svg>
<div class="t" style="left:88.2px;top:128.6px;font-size:12px;letter-spacing:-0.40px;color:#858585;">Parametres</div>
<svg class="abs" style="left:66.0px;top:148.0px;" width="16" height="14" viewBox="0 0 16 14"><rect x="0.8" y="1.3" width="14.4" height="11.4" fill="#fff" stroke="#000" stroke-width="1.3"/><path d="M0.8 5.1h14.4M0.8 8.9h14.4M4.4 1.3v11.4M8 1.3v11.4M11.6 1.3v11.4" stroke="#000" stroke-width="1.2"/></svg>
<div class="t" style="left:88.2px;top:148.6px;font-size:12px;letter-spacing:-0.20px;">Tableau_pilote</div>
<svg class="abs" style="left:65.0px;top:167.0px;" width="18" height="17" viewBox="0 0 18 17"><circle cx="11.5" cy="6.2" r="4.6" fill="none" stroke="#a8a8a8" stroke-width="1.3"/><path d="M6 8.5h5.5v6H6z" fill="#b5b5b5"/><circle cx="5.6" cy="11" r="4.3" fill="#dd0fdd"/><path d="M2.6 10.6h6v1.6h-6z" fill="#fff"/><path d="M4 14.2h3.2v1.4H4z" fill="#fff"/></svg>
<div class="t" style="left:88.2px;top:168.6px;font-size:12px;letter-spacing:0.01px;color:#858585;">Meridien</div>
<svg class="abs" style="left:28.2px;top:189.4px;" width="10" height="12" viewBox="0 0 10 12"><path d="M3 2L7.2 6L3 10" fill="none" stroke="#6e6e6e" stroke-width="1.3"/></svg>
<svg class="abs" style="left:46.0px;top:187.2px;" width="16" height="16" viewBox="0 0 16 16"><path d="M1.2 2.2h4.3l1.2 1.6h7.6v9.8H1.2z" fill="#b3b3b3"/><path d="M1.2 5h13.1v8.6H1.2z" fill="#c9c9c9"/><path d="M1.2 12.6h13.1v1H1.2z" fill="#b0b0b0"/></svg>
<div class="t" style="left:68.0px;top:188.6px;font-size:12px;letter-spacing:0.06px;color:#858585;">Pilote</div>
<svg class="abs" style="left:28.2px;top:209.4px;" width="10" height="12" viewBox="0 0 10 12"><path d="M3 2L7.2 6L3 10" fill="none" stroke="#6e6e6e" stroke-width="1.3"/></svg>
<svg class="abs" style="left:46.0px;top:207.2px;" width="16" height="16" viewBox="0 0 16 16"><path d="M1.2 2.2h4.3l1.2 1.6h7.6v9.8H1.2z" fill="#b3b3b3"/><path d="M1.2 5h13.1v8.6H1.2z" fill="#c9c9c9"/><path d="M1.2 12.6h13.1v1H1.2z" fill="#b0b0b0"/></svg>
<div class="t" style="left:68.0px;top:208.6px;font-size:12px;letter-spacing:-0.20px;color:#858585;">Plan_Meridien</div>
<svg class="abs" style="left:28.2px;top:229.3px;" width="10" height="12" viewBox="0 0 10 12"><path d="M3 2L7.2 6L3 10" fill="none" stroke="#6e6e6e" stroke-width="1.3"/></svg>
<svg class="abs" style="left:46.0px;top:227.1px;" width="16" height="16" viewBox="0 0 16 16"><path d="M1.2 2.2h4.3l1.2 1.6h7.6v9.8H1.2z" fill="#b3b3b3"/><path d="M1.2 5h13.1v8.6H1.2z" fill="#c9c9c9"/><path d="M1.2 12.6h13.1v1H1.2z" fill="#b0b0b0"/></svg>
<div class="t" style="left:68.0px;top:228.6px;font-size:12px;letter-spacing:-0.59px;color:#858585;">Plan_Epaisseurs</div>
<svg class="abs" style="left:28.2px;top:249.2px;" width="10" height="12" viewBox="0 0 10 12"><path d="M3 2L7.2 6L3 10" fill="none" stroke="#6e6e6e" stroke-width="1.3"/></svg>
<svg class="abs" style="left:46.0px;top:247.0px;" width="16" height="16" viewBox="0 0 16 16"><path d="M1.2 2.2h4.3l1.2 1.6h7.6v9.8H1.2z" fill="#b3b3b3"/><path d="M1.2 5h13.1v8.6H1.2z" fill="#c9c9c9"/><path d="M1.2 12.6h13.1v1H1.2z" fill="#b0b0b0"/></svg>
<div class="t" style="left:68.0px;top:248.6px;font-size:12px;letter-spacing:-0.55px;color:#858585;">Plan_Cascade</div>
<svg class="abs" style="left:28.2px;top:269.3px;" width="10" height="12" viewBox="0 0 10 12"><path d="M3 2L7.2 6L3 10" fill="none" stroke="#6e6e6e" stroke-width="1.3"/></svg>
<svg class="abs" style="left:46.0px;top:267.1px;" width="16" height="16" viewBox="0 0 16 16"><path d="M1.2 2.2h4.3l1.2 1.6h7.6v9.8H1.2z" fill="#b3b3b3"/><path d="M1.2 5h13.1v8.6H1.2z" fill="#c9c9c9"/><path d="M1.2 12.6h13.1v1H1.2z" fill="#b0b0b0"/></svg>
<div class="t" style="left:68.0px;top:268.6px;font-size:12px;letter-spacing:-0.30px;color:#858585;">Plan_Longueurs</div>
<svg class="abs" style="left:26.8px;top:290.2px;" width="12" height="10" viewBox="0 0 12 10"><path d="M2 3L6 7.2L10 3" fill="none" stroke="#262626" stroke-width="1.3"/></svg>
<svg class="abs" style="left:46.0px;top:287.0px;" width="16" height="16" viewBox="0 0 16 16"><path d="M1.2 2.2h4.3l1.2 1.6h7.6v9.8H1.2z" fill="#b3b3b3"/><path d="M1.2 5h13.1v8.6H1.2z" fill="#c9c9c9"/><path d="M1.2 12.6h13.1v1H1.2z" fill="#b0b0b0"/></svg>
<div class="t" style="left:68.0px;top:288.6px;font-size:12px;letter-spacing:-0.18px;color:#858585;">Domaine3D</div>
<svg class="abs" style="left:47.6px;top:309.4px;" width="10" height="12" viewBox="0 0 10 12"><path d="M3 2L7.2 6L3 10" fill="none" stroke="#6e6e6e" stroke-width="1.3"/></svg>
<svg class="abs" style="left:66.0px;top:307.2px;" width="16" height="16" viewBox="0 0 16 16"><path d="M1.2 2.2h4.3l1.2 1.6h7.6v9.8H1.2z" fill="#b3b3b3"/><path d="M1.2 5h13.1v8.6H1.2z" fill="#c9c9c9"/><path d="M1.2 12.6h13.1v1H1.2z" fill="#b0b0b0"/></svg>
<div class="t" style="left:88.2px;top:308.6px;font-size:12px;letter-spacing:-0.37px;color:#858585;">Points3Da</div>
<svg class="abs" style="left:47.6px;top:329.3px;" width="10" height="12" viewBox="0 0 10 12"><path d="M3 2L7.2 6L3 10" fill="none" stroke="#6e6e6e" stroke-width="1.3"/></svg>
<svg class="abs" style="left:66.0px;top:327.1px;" width="16" height="16" viewBox="0 0 16 16"><path d="M1.2 2.2h4.3l1.2 1.6h7.6v9.8H1.2z" fill="#b3b3b3"/><path d="M1.2 5h13.1v8.6H1.2z" fill="#c9c9c9"/><path d="M1.2 12.6h13.1v1H1.2z" fill="#b0b0b0"/></svg>
<div class="t" style="left:88.2px;top:328.6px;font-size:12px;letter-spacing:-0.30px;color:#858585;">Points3De</div>
<svg class="abs" style="left:47.6px;top:349.3px;" width="10" height="12" viewBox="0 0 10 12"><path d="M3 2L7.2 6L3 10" fill="none" stroke="#6e6e6e" stroke-width="1.3"/></svg>
<svg class="abs" style="left:66.0px;top:347.1px;" width="16" height="16" viewBox="0 0 16 16"><path d="M1.2 2.2h4.3l1.2 1.6h7.6v9.8H1.2z" fill="#b3b3b3"/><path d="M1.2 5h13.1v8.6H1.2z" fill="#c9c9c9"/><path d="M1.2 12.6h13.1v1H1.2z" fill="#b0b0b0"/></svg>
<div class="t" style="left:88.2px;top:348.6px;font-size:12px;letter-spacing:-0.19px;color:#858585;">Points3Di</div>
<svg class="abs" style="left:47.6px;top:369.3px;" width="10" height="12" viewBox="0 0 10 12"><path d="M3 2L7.2 6L3 10" fill="none" stroke="#6e6e6e" stroke-width="1.3"/></svg>
<svg class="abs" style="left:66.0px;top:367.1px;" width="16" height="16" viewBox="0 0 16 16"><path d="M1.2 2.2h4.3l1.2 1.6h7.6v9.8H1.2z" fill="#b3b3b3"/><path d="M1.2 5h13.1v8.6H1.2z" fill="#c9c9c9"/><path d="M1.2 12.6h13.1v1H1.2z" fill="#b0b0b0"/></svg>
<div class="t" style="left:88.2px;top:368.6px;font-size:12px;letter-spacing:-0.28px;color:#858585;">Points3Die</div>
<svg class="abs" style="left:47.6px;top:389.3px;" width="10" height="12" viewBox="0 0 10 12"><path d="M3 2L7.2 6L3 10" fill="none" stroke="#6e6e6e" stroke-width="1.3"/></svg>
<svg class="abs" style="left:66.0px;top:387.1px;" width="16" height="16" viewBox="0 0 16 16"><path d="M1.2 2.2h4.3l1.2 1.6h7.6v9.8H1.2z" fill="#b3b3b3"/><path d="M1.2 5h13.1v8.6H1.2z" fill="#c9c9c9"/><path d="M1.2 12.6h13.1v1H1.2z" fill="#b0b0b0"/></svg>
<div class="t" style="left:88.2px;top:388.6px;font-size:12px;letter-spacing:-0.43px;color:#858585;">Filet3Da</div>
<svg class="abs" style="left:47.6px;top:409.3px;" width="10" height="12" viewBox="0 0 10 12"><path d="M3 2L7.2 6L3 10" fill="none" stroke="#6e6e6e" stroke-width="1.3"/></svg>
<svg class="abs" style="left:66.0px;top:407.1px;" width="16" height="16" viewBox="0 0 16 16"><path d="M1.2 2.2h4.3l1.2 1.6h7.6v9.8H1.2z" fill="#b3b3b3"/><path d="M1.2 5h13.1v8.6H1.2z" fill="#c9c9c9"/><path d="M1.2 12.6h13.1v1H1.2z" fill="#b0b0b0"/></svg>
<div class="t" style="left:88.2px;top:408.6px;font-size:12px;letter-spacing:-0.38px;color:#858585;">Filet3De</div>
<svg class="abs" style="left:47.6px;top:429.3px;" width="10" height="12" viewBox="0 0 10 12"><path d="M3 2L7.2 6L3 10" fill="none" stroke="#6e6e6e" stroke-width="1.3"/></svg>
<svg class="abs" style="left:66.0px;top:427.1px;" width="16" height="16" viewBox="0 0 16 16"><path d="M1.2 2.2h4.3l1.2 1.6h7.6v9.8H1.2z" fill="#b3b3b3"/><path d="M1.2 5h13.1v8.6H1.2z" fill="#c9c9c9"/><path d="M1.2 12.6h13.1v1H1.2z" fill="#b0b0b0"/></svg>
<div class="t" style="left:88.2px;top:428.6px;font-size:12px;letter-spacing:-0.27px;color:#858585;">Filet3Di</div>
<svg class="abs" style="left:47.6px;top:449.3px;" width="10" height="12" viewBox="0 0 10 12"><path d="M3 2L7.2 6L3 10" fill="none" stroke="#6e6e6e" stroke-width="1.3"/></svg>
<svg class="abs" style="left:66.0px;top:447.1px;" width="16" height="16" viewBox="0 0 16 16"><path d="M1.2 2.2h4.3l1.2 1.6h7.6v9.8H1.2z" fill="#b3b3b3"/><path d="M1.2 5h13.1v8.6H1.2z" fill="#c9c9c9"/><path d="M1.2 12.6h13.1v1H1.2z" fill="#b0b0b0"/></svg>
<div class="t" style="left:88.2px;top:448.6px;font-size:12px;letter-spacing:-0.31px;color:#858585;">Filet3Die</div>
<svg class="abs" style="left:66.0px;top:467.0px;" width="17" height="17" viewBox="0 0 17 17"><g transform="scale(0.7)"><path d="M1 20.4L1.8 11.4Q4.6 8 7 9.2Q10.4 2 15.8 1.2Q21 2.4 22.4 19L17 19.8Q15.6 18 13.4 19L7 23Q6.4 15.6 4.6 14.6Q3 15.6 1 20.4z" fill="#6d95c0" stroke="#4f7aa8" stroke-width="0.7" stroke-linejoin="round"/><path d="M1 20.4L1.8 11.4Q3.4 9.6 4.6 9.4L4.6 14.6Q3 15.6 1 20.4z" fill="#3f6a9a"/><path d="M6.4 10.4Q10 12 10.6 20.6M10.2 4.6Q15.4 6 16.8 19.4" fill="none" stroke="#a8c6e6" stroke-width="1.5"/><path d="M13.6 2Q18.6 4 19.8 19.2" fill="none" stroke="#a8c6e6" stroke-width="1" opacity="0.6"/></g></svg>
<div class="t" style="left:88.2px;top:468.6px;font-size:12px;letter-spacing:-0.30px;color:#7d7d7d;">SurfA</div>
<svg class="abs" style="left:66.0px;top:487.0px;" width="17" height="17" viewBox="0 0 17 17"><g transform="scale(0.7)"><path d="M1 20.4L1.8 11.4Q4.6 8 7 9.2Q10.4 2 15.8 1.2Q21 2.4 22.4 19L17 19.8Q15.6 18 13.4 19L7 23Q6.4 15.6 4.6 14.6Q3 15.6 1 20.4z" fill="#b4b4b4" stroke="#9a9a9a" stroke-width="0.7" stroke-linejoin="round"/><path d="M1 20.4L1.8 11.4Q3.4 9.6 4.6 9.4L4.6 14.6Q3 15.6 1 20.4z" fill="#8e8e8e"/><path d="M6.4 10.4Q10 12 10.6 20.6M10.2 4.6Q15.4 6 16.8 19.4" fill="none" stroke="#dcdcdc" stroke-width="1.5"/><path d="M13.6 2Q18.6 4 19.8 19.2" fill="none" stroke="#dcdcdc" stroke-width="1" opacity="0.6"/></g></svg>
<div class="t" style="left:88.2px;top:488.6px;font-size:12px;letter-spacing:-0.80px;color:#858585;">SurfE</div>
<svg class="abs" style="left:66.0px;top:507.0px;" width="17" height="17" viewBox="0 0 17 17"><g transform="scale(0.7)"><path d="M1 20.4L1.8 11.4Q4.6 8 7 9.2Q10.4 2 15.8 1.2Q21 2.4 22.4 19L17 19.8Q15.6 18 13.4 19L7 23Q6.4 15.6 4.6 14.6Q3 15.6 1 20.4z" fill="#b4b4b4" stroke="#9a9a9a" stroke-width="0.7" stroke-linejoin="round"/><path d="M1 20.4L1.8 11.4Q3.4 9.6 4.6 9.4L4.6 14.6Q3 15.6 1 20.4z" fill="#8e8e8e"/><path d="M6.4 10.4Q10 12 10.6 20.6M10.2 4.6Q15.4 6 16.8 19.4" fill="none" stroke="#dcdcdc" stroke-width="1.5"/><path d="M13.6 2Q18.6 4 19.8 19.2" fill="none" stroke="#dcdcdc" stroke-width="1" opacity="0.6"/></g></svg>
<div class="t" style="left:88.2px;top:508.6px;font-size:12px;letter-spacing:-0.44px;color:#858585;">SurfI</div>
<svg class="abs" style="left:66.0px;top:527.0px;" width="17" height="17" viewBox="0 0 17 17"><g transform="scale(0.7)"><path d="M1 20.4L1.8 11.4Q4.6 8 7 9.2Q10.4 2 15.8 1.2Q21 2.4 22.4 19L17 19.8Q15.6 18 13.4 19L7 23Q6.4 15.6 4.6 14.6Q3 15.6 1 20.4z" fill="#3b72b8" stroke="#16305c" stroke-width="0.7" stroke-linejoin="round"/><path d="M1 20.4L1.8 11.4Q3.4 9.6 4.6 9.4L4.6 14.6Q3 15.6 1 20.4z" fill="#1d3f78"/><path d="M6.4 10.4Q10 12 10.6 20.6M10.2 4.6Q15.4 6 16.8 19.4" fill="none" stroke="#f0dc3a" stroke-width="1.5"/><path d="M13.6 2Q18.6 4 19.8 19.2" fill="none" stroke="#f0dc3a" stroke-width="1" opacity="0.6"/></g></svg>
<div class="t" style="left:88.2px;top:528.6px;font-size:12px;letter-spacing:-0.75px;">SurfIE</div>
<div class="abs" style="left:75.0px;top:547.4px;width:1.0px;height:1.0px;background:#999;"></div>
<div class="abs" style="left:4.0px;top:677.0px;width:170.0px;height:201.0px;background:#fff;border:1px solid #828790;border-bottom:none;box-sizing:border-box;"></div>
<div class="t" style="left:9.3px;top:683.0px;font-size:12px;letter-spacing:-0.12px;">Propriété</div>
<div class="t" style="left:108.8px;top:683.0px;font-size:12px;letter-spacing:-0.28px;">Valeur</div>
<div class="abs" style="left:104.0px;top:679.0px;width:1.0px;height:22.0px;background:#e2e2e2;"></div>
<div class="abs" style="left:5.0px;top:701.0px;width:168.0px;height:19.0px;background:#a0a0a0;"></div>
<div class="t" style="left:8.4px;top:704.8px;font-size:12px;letter-spacing:-1.13px;font-weight:bold;color:#fff;">Base</div>
<div class="abs" style="left:25.0px;top:721.0px;width:148.0px;height:19.0px;background:#f5f5f5;"></div>
<div class="abs" style="left:25.0px;top:740.0px;width:148.0px;height:1.0px;background:#d6d6d6;"></div>
<div class="abs" style="left:104.0px;top:721.0px;width:1.0px;height:79.0px;background:#d6d6d6;"></div>
<svg class="abs" style="left:9.6px;top:725.0px;" width="10" height="12" viewBox="0 0 10 12"><path d="M3 2L7.2 6L3 10" fill="none" stroke="#6e6e6e" stroke-width="1.3"/></svg>
<div class="t" style="left:28.4px;top:725.4px;font-size:12px;letter-spacing:-0.16px;">Placement</div>
<div class="t" style="left:108.5px;top:725.4px;font-size:12px;letter-spacing:-0.50px;width:64.5px;overflow:hidden;">[(0,00 0,00 1,</div>
<div class="abs" style="left:25.0px;top:760.0px;width:148.0px;height:1.0px;background:#d6d6d6;"></div>
<div class="t" style="left:28.4px;top:745.4px;font-size:12px;letter-spacing:-0.56px;">Label</div>
<div class="t" style="left:108.5px;top:745.4px;font-size:12px;letter-spacing:-0.43px;">SurfA</div>
<div class="abs" style="left:5.0px;top:761.0px;width:168.0px;height:19.0px;background:#a0a0a0;"></div>
<div class="t" style="left:8.4px;top:764.8px;font-size:12px;letter-spacing:-0.49px;font-weight:bold;color:#fff;">Sections</div>
<div class="abs" style="left:25.0px;top:800.0px;width:148.0px;height:1.0px;background:#d6d6d6;"></div>
<div class="t" style="left:28.4px;top:785.4px;font-size:12px;letter-spacing:-0.31px;">NSections</div>
<div class="t" style="left:108.5px;top:785.4px;font-size:12px;letter-spacing:-0.06px;width:64.5px;overflow:hidden;">[Filet3Da1.Ed</div>
<!--/LEFT-->
</div>
<!-- VIEWPORT -->
<div id="view" class="abs">
<!--VIEW--><svg class="abs" style="left:0;top:0;" width="770" height="878" viewBox="187 152 770 878">
<defs>
<radialGradient id="sg" gradientUnits="userSpaceOnUse" cx="645" cy="730" r="330" gradientTransform="translate(645 730) rotate(-45) scale(1.3 1) translate(-645 -730)">
<stop offset="0" stop-color="#00ffff"/><stop offset="0.15" stop-color="#01fbfb"/><stop offset="0.32" stop-color="#06eaea"/><stop offset="0.42" stop-color="#09d8d8"/><stop offset="0.52" stop-color="#0acdcd"/><stop offset="0.8" stop-color="#0aaeae"/><stop offset="1" stop-color="#0a9e9e"/>
</radialGradient>
<linearGradient id="rg" gradientUnits="userSpaceOnUse" x1="785" y1="585" x2="830" y2="570">
<stop offset="0" stop-color="#0aa0a0" stop-opacity="0"/><stop offset="0.6" stop-color="#0aa0a0" stop-opacity="0.12"/><stop offset="1" stop-color="#0a8c8c" stop-opacity="0.55"/>
</linearGradient>
</defs>
<!-- origin axis cross -->
<g stroke-width="1.6" fill="none" stroke-linecap="butt">
<path d="M426.3 333 L426.3 263" stroke="#1c1c82"/>
<path d="M426.3 333 L486.5 298.5" stroke="#1c7c1c"/>
<path d="M426.3 333 L486.5 368.3" stroke="#8a1c1c"/>
</g>
<path d="M426.3 262.5 L424.6 272.5 L428 272.5Z" fill="#1c1c82"/>
<path d="M487 298.2 L478.2 300.6 L480.2 304.2Z" fill="#1c7c1c"/>
<path d="M487 368.6 L480.2 362.6 L478.2 366.2Z" fill="#8a1c1c"/>
<!-- surface -->
<path d="M371.4 495.8 C389.9 496.8 444.2 500.2 482.3 501.7 C520.4 503.2 566.8 504.3 600.0 505.0 C633.2 505.7 655.2 505.5 681.5 505.8 C707.8 506.1 739.5 506.2 757.6 506.6 C775.7 507.0 783.4 507.5 790.2 508.0 C797.0 508.5 796.8 509.1 798.5 509.8 C800.2 510.5 799.9 511.6 800.2 512.0 C801.5 516.2 805.1 528.3 808.0 537.0 C810.9 545.7 814.2 555.0 817.4 564.2 C820.6 573.4 823.8 583.4 827.0 592.0 C830.2 600.6 832.7 607.9 836.4 615.9 C840.1 623.9 847.1 635.8 849.2 639.8 C846.2 641.0 838.1 644.4 831.0 647.2 C823.9 650.0 814.2 652.6 806.5 656.7 C798.8 660.8 793.8 665.3 784.8 671.6 C775.8 677.9 764.9 685.0 752.2 694.7 C739.5 704.4 725.0 716.6 708.7 730.0 C692.4 743.4 672.4 760.6 654.3 774.9 C636.2 789.2 614.8 805.1 600.0 815.7 C585.2 826.3 571.3 834.7 565.6 838.5 C561.8 837.5 551.3 835.6 543.0 832.6 C534.7 829.6 525.9 826.0 515.9 820.3 C505.9 814.6 493.7 807.2 483.3 798.6 C472.9 790.0 462.5 780.0 453.4 768.7 C444.3 757.4 436.1 742.9 428.9 730.7 C421.6 718.5 415.2 707.1 409.9 695.3 C404.5 683.5 400.6 672.3 396.8 660.0 C393.0 647.7 390.4 637.7 387.2 621.3 C384.0 604.9 380.3 582.4 377.7 561.5 C375.1 540.6 372.4 506.8 371.4 495.8Z" fill="url(#sg)"/>
<clipPath id="silc"><path d="M371.4 495.8 C389.9 496.8 444.2 500.2 482.3 501.7 C520.4 503.2 566.8 504.3 600.0 505.0 C633.2 505.7 655.2 505.5 681.5 505.8 C707.8 506.1 739.5 506.2 757.6 506.6 C775.7 507.0 783.4 507.5 790.2 508.0 C797.0 508.5 796.8 509.1 798.5 509.8 C800.2 510.5 799.9 511.6 800.2 512.0 C801.5 516.2 805.1 528.3 808.0 537.0 C810.9 545.7 814.2 555.0 817.4 564.2 C820.6 573.4 823.8 583.4 827.0 592.0 C830.2 600.6 832.7 607.9 836.4 615.9 C840.1 623.9 847.1 635.8 849.2 639.8 C846.2 641.0 838.1 644.4 831.0 647.2 C823.9 650.0 814.2 652.6 806.5 656.7 C798.8 660.8 793.8 665.3 784.8 671.6 C775.8 677.9 764.9 685.0 752.2 694.7 C739.5 704.4 725.0 716.6 708.7 730.0 C692.4 743.4 672.4 760.6 654.3 774.9 C636.2 789.2 614.8 805.1 600.0 815.7 C585.2 826.3 571.3 834.7 565.6 838.5 C561.8 837.5 551.3 835.6 543.0 832.6 C534.7 829.6 525.9 826.0 515.9 820.3 C505.9 814.6 493.7 807.2 483.3 798.6 C472.9 790.0 462.5 780.0 453.4 768.7 C444.3 757.4 436.1 742.9 428.9 730.7 C421.6 718.5 415.2 707.1 409.9 695.3 C404.5 683.5 400.6 672.3 396.8 660.0 C393.0 647.7 390.4 637.7 387.2 621.3 C384.0 604.9 380.3 582.4 377.7 561.5 C375.1 540.6 372.4 506.8 371.4 495.8Z"/></clipPath>
<filter id="bl" x="-20%" y="-20%" width="140%" height="140%"><feGaussianBlur stdDeviation="2.2"/></filter>
<g clip-path="url(#silc)"><path d="M371.4 495.8 C389.9 496.8 444.2 500.2 482.3 501.7 C520.4 503.2 566.8 504.3 600.0 505.0 C633.2 505.7 655.2 505.5 681.5 505.8 C707.8 506.1 739.5 506.2 757.6 506.6 C775.7 507.0 783.4 507.5 790.2 508.0 C797.0 508.5 796.8 509.1 798.5 509.8 C800.2 510.5 799.9 511.6 800.2 512.0 C801.5 516.2 805.1 528.3 808.0 537.0 C810.9 545.7 814.2 555.0 817.4 564.2 C820.6 573.4 823.8 583.4 827.0 592.0 C830.2 600.6 832.7 607.9 836.4 615.9 C840.1 623.9 847.1 635.8 849.2 639.8 C846.2 641.0 838.1 644.4 831.0 647.2 C823.9 650.0 814.2 652.6 806.5 656.7 C798.8 660.8 793.8 665.3 784.8 671.6 C775.8 677.9 764.9 685.0 752.2 694.7 C739.5 704.4 725.0 716.6 708.7 730.0 C692.4 743.4 672.4 760.6 654.3 774.9 C636.2 789.2 614.8 805.1 600.0 815.7 C585.2 826.3 571.3 834.7 565.6 838.5 C561.8 837.5 551.3 835.6 543.0 832.6 C534.7 829.6 525.9 826.0 515.9 820.3 C505.9 814.6 493.7 807.2 483.3 798.6 C472.9 790.0 462.5 780.0 453.4 768.7 C444.3 757.4 436.1 742.9 428.9 730.7 C421.6 718.5 415.2 707.1 409.9 695.3 C404.5 683.5 400.6 672.3 396.8 660.0 C393.0 647.7 390.4 637.7 387.2 621.3 C384.0 604.9 380.3 582.4 377.7 561.5 C375.1 540.6 372.4 506.8 371.4 495.8Z" fill="url(#rg)" opacity="0.35"/><path d="M800.2 512.0 C801.5 516.2 805.1 528.3 808.0 537.0 C810.9 545.7 814.2 555.0 817.4 564.2 C820.6 573.4 823.8 583.4 827.0 592.0 C830.2 600.6 832.7 607.9 836.4 615.9 C840.1 623.9 847.1 635.8 849.2 639.8" fill="none" stroke="#066a6a" stroke-width="9" opacity="0.75" filter="url(#bl)"/></g>
<path d="M800.2 512.0 C801.5 516.2 805.1 528.3 808.0 537.0 C810.9 545.7 814.2 555.0 817.4 564.2 C820.6 573.4 823.8 583.4 827.0 592.0 C830.2 600.6 832.7 607.9 836.4 615.9 C840.1 623.9 847.1 635.8 849.2 639.8" fill="none" stroke="#0a2c2c" stroke-width="1" opacity="0.85"/>
<path d="M371.4 495.8 C389.9 496.8 444.2 500.2 482.3 501.7 C520.4 503.2 566.8 504.3 600.0 505.0 C633.2 505.7 655.2 505.5 681.5 505.8 C707.8 506.1 739.5 506.2 757.6 506.6 C775.7 507.0 783.4 507.5 790.2 508.0 C797.0 508.5 796.8 509.1 798.5 509.8 C800.2 510.5 799.9 511.6 800.2 512.0 C799.3 512.5 798.9 513.6 795.0 515.0 C791.1 516.4 784.6 518.8 776.6 520.2 C768.6 521.6 758.0 522.9 746.7 523.5 C735.4 524.1 721.2 524.0 708.7 524.0 C696.2 524.0 684.2 523.9 672.0 523.5 C659.8 523.1 647.3 522.5 635.3 521.6 C623.3 520.7 618.7 520.1 600.0 518.2 C581.3 516.3 549.7 513.0 523.0 510.4 C496.3 507.8 465.3 504.8 440.0 502.4 C414.7 500.0 382.8 496.9 371.4 495.8Z" fill="#0cd6d6"/>
<path d="M849.2 639.8 C846.2 641.0 838.1 644.4 831.0 647.2 C823.9 650.0 814.2 652.6 806.5 656.7 C798.8 660.8 793.8 665.3 784.8 671.6 C775.8 677.9 764.9 685.0 752.2 694.7 C739.5 704.4 725.0 716.6 708.7 730.0 C692.4 743.4 672.4 760.6 654.3 774.9 C636.2 789.2 614.8 805.1 600.0 815.7 C585.2 826.3 571.3 834.7 565.6 838.5 C571.3 833.6 585.2 820.9 600.0 808.9 C614.8 796.9 636.2 781.4 654.3 766.7 C672.4 752.0 692.4 733.9 708.7 720.5 C725.0 707.1 739.5 695.4 752.2 686.6 C764.9 677.8 775.8 672.6 784.8 667.6 C793.8 662.6 798.8 660.1 806.5 656.7 C814.2 653.3 823.9 650.0 831.0 647.2 C838.1 644.4 846.2 641.0 849.2 639.8Z" fill="#0de6e6"/>
<g fill="none" stroke="#0c1414" stroke-width="1.9" stroke-linejoin="round">
<path d="M371.4 495.8 C389.9 496.8 444.2 500.2 482.3 501.7 C520.4 503.2 566.8 504.3 600.0 505.0 C633.2 505.7 655.2 505.5 681.5 505.8 C707.8 506.1 739.5 506.2 757.6 506.6 C775.7 507.0 783.4 507.5 790.2 508.0 C797.0 508.5 796.8 509.1 798.5 509.8 C800.2 510.5 799.9 511.6 800.2 512.0"/>
<path d="M371.4 495.8 C382.8 496.9 414.7 500.0 440.0 502.4 C465.3 504.8 496.3 507.8 523.0 510.4 C549.7 513.0 581.3 516.3 600.0 518.2 C618.7 520.1 623.3 520.7 635.3 521.6 C647.3 522.5 659.8 523.1 672.0 523.5 C684.2 523.9 696.2 524.0 708.7 524.0 C721.2 524.0 735.4 524.1 746.7 523.5 C758.0 522.9 768.6 521.6 776.6 520.2 C784.6 518.8 791.1 516.4 795.0 515.0 C798.9 513.6 799.3 512.5 800.2 512.0"/>
<path d="M849.2 639.8 C846.2 641.0 838.1 644.4 831.0 647.2 C823.9 650.0 814.2 652.6 806.5 656.7 C798.8 660.8 793.8 665.3 784.8 671.6 C775.8 677.9 764.9 685.0 752.2 694.7 C739.5 704.4 725.0 716.6 708.7 730.0 C692.4 743.4 672.4 760.6 654.3 774.9 C636.2 789.2 614.8 805.1 600.0 815.7 C585.2 826.3 571.3 834.7 565.6 838.5" stroke-width="1.6"/>
<path d="M849.2 639.8 C846.2 641.0 838.1 644.4 831.0 647.2 C823.9 650.0 814.2 653.3 806.5 656.7 C798.8 660.1 793.8 662.6 784.8 667.6 C775.8 672.6 764.9 677.8 752.2 686.6 C739.5 695.4 725.0 707.1 708.7 720.5 C692.4 733.9 672.4 752.0 654.3 766.7 C636.2 781.4 614.8 796.9 600.0 808.9 C585.2 820.9 571.3 833.6 565.6 838.5" stroke-width="1.6"/>
<path d="M565.6 838.5 C561.8 837.5 551.3 835.6 543.0 832.6 C534.7 829.6 525.9 826.0 515.9 820.3 C505.9 814.6 493.7 807.2 483.3 798.6 C472.9 790.0 462.5 780.0 453.4 768.7 C444.3 757.4 436.1 742.9 428.9 730.7 C421.6 718.5 415.2 707.1 409.9 695.3 C404.5 683.5 400.6 672.3 396.8 660.0 C393.0 647.7 390.4 637.7 387.2 621.3 C384.0 604.9 380.3 582.4 377.7 561.5 C375.1 540.6 372.4 506.8 371.4 495.8"/>
</g>
<!--NAVCUBE--><g id="navcube">
<path d="M874.9 170.7 L897.1 170.7 L886.0 160.0Z" fill="#8d8fb0"/>
<path d="M874.9 279.3 L897.1 279.3 L886.0 290.0Z" fill="#8d8fb0"/>
<path d="M832.2 213.8 L832.2 236.0 L820.9 224.9Z" fill="#8d8fb0"/>
<path d="M940.0 213.8 L940.0 236.0 L951.3 224.9Z" fill="#8d8fb0"/>
<circle cx="945.9" cy="164.8" r="6.2" fill="#8d8fb0"/>
<path d="M866.6 165.9 Q848.4 170.3 838.8 186.3 L836.6 182.9 L837.0 194.4 L850.3 189.6 L845.8 188.5 Q854.0 177.7 869.3 173.3Z" fill="#8d8fb0"/>
<path d="M905.4 165.9 Q923.5 170.3 933.1 186.3 L935.4 182.9 L935.0 194.4 L921.7 189.6 L926.1 188.5 Q918.0 177.7 902.6 173.3Z" fill="#8d8fb0"/>
<path d="M854.0 201.4 L882.8 189.8 L889.5 189.8 L918.3 200.3 L886.0 217.0Z" fill="#cbccdc" stroke="#1a1a22" stroke-width="1.0" stroke-linejoin="round"/>
<path d="M854.0 201.4 L886.0 217.0 L879.9 227.7 L848.8 209.9Z" fill="#c8c9da" stroke="#1a1a22" stroke-width="1.0" stroke-linejoin="round"/>
<path d="M918.3 200.3 L886.0 217.0 L891.9 227.7 L922.8 209.9Z" fill="#c4c5d7" stroke="#1a1a22" stroke-width="1.0" stroke-linejoin="round"/>
<path d="M848.8 209.9 L879.9 227.7 L880.4 263.2 L854.7 242.5Z" fill="#c5c6d7" stroke="#1a1a22" stroke-width="1.0" stroke-linejoin="round"/>
<path d="M922.8 209.9 L891.9 227.7 L891.5 263.2 L917.2 241.0Z" fill="#bfc0d2" stroke="#1a1a22" stroke-width="1.0" stroke-linejoin="round"/>
<path d="M879.9 227.7 L891.9 227.7 L891.5 263.2 L890.6 264.3 L881.4 264.3 L880.4 263.2Z" fill="#c8c9da" stroke="#1a1a22" stroke-width="1.0" stroke-linejoin="round"/>
<path d="M886.0 217.0 L879.9 227.7 L891.9 227.7Z" fill="#b4b5ca" stroke="#1a1a22" stroke-width="1.1" stroke-linejoin="round"/>
<text transform="matrix(0.580 0.400 0.040 0.980 865.3 238.0)" font-family="Liberation Sans, sans-serif" font-weight="bold" font-size="9" text-anchor="middle" fill="#30303c" stroke="#30303c" stroke-width="0.45" y="3.2">FRONT</text>
<text transform="matrix(0.620 -0.420 -0.040 0.980 907.2 238.2)" font-family="Liberation Sans, sans-serif" font-weight="bold" font-size="9" text-anchor="middle" fill="#30303c" stroke="#30303c" stroke-width="0.45" y="3.2">RIGHT</text>
<text transform="matrix(0.860 0.170 -0.620 0.400 886.5 200.1)" font-family="Liberation Sans, sans-serif" font-weight="bold" font-size="9" text-anchor="middle" fill="#3a3a46" stroke="#3a3a46" stroke-width="0.45" y="3.2">TOP</text>
<path d="M849.4 245.8 L877.1 229.9" stroke="#a0f4a0" stroke-width="1.4" fill="none" opacity="0.9"/>
<path d="M849.4 245.8 L854.4 243.0" stroke="#00e000" stroke-width="1.6" fill="none"/>
<path d="M849.4 245.8 L842.0 214.4" stroke="#0000ff" stroke-width="1.6" fill="none"/>
<path d="M849.4 245.8 L873.8 267.8" stroke="#ff0000" stroke-width="1.6" fill="none"/>
<path d="M918.7 266.2 L928.5 270.2 L928.5 281.7 L918.7 286.3 L908.9 281.7 L908.9 270.2Z" fill="#8587a8"/>
<path d="M918.7 266.2 L928.5 270.2 L918.7 274.8 L908.9 270.2Z" fill="#9a9cb9"/>
<path d="M918.7 274.8 L928.5 270.2 L928.5 281.7 L918.7 286.3Z" fill="#7d7fa2"/>
<path d="M933.5 273.5 L945.0 273.5 L939.2 279.1Z" fill="#3e3e68"/>
</g><!--/NAVCUBE-->
<!--CORNERAXIS--><g id="corneraxis">
<path d="M920.4 1014.3 L920.4 992.6" stroke="#1c1c82" stroke-width="1.3" fill="none"/>
<path d="M920.4 988.9 L918.0 998.6 L922.8 998.6Z" fill="#1c1c82"/>
<path d="M920.4 1014.3 L931.0 1008.5" stroke="#1c7c1c" stroke-width="1.3" fill="none"/>
<path d="M936.3 1005.2 L930.2 1006.5 L931.9 1010.2Z" fill="#1c7c1c"/>
<path d="M920.4 1014.3 L934.3 1022.4" stroke="#8a1c1c" stroke-width="1.3" fill="none"/>
<path d="M941.9 1026.7 L935.9 1019.9 L932.3 1024.7Z" fill="#8a1c1c"/>
<text x="924.0" y="987.9" font-family="Liberation Sans, sans-serif" font-weight="bold" font-size="9.5" text-anchor="middle" fill="#000">Z</text>
<text x="940.1" y="1003.8" font-family="Liberation Sans, sans-serif" font-weight="bold" font-size="9.5" text-anchor="middle" fill="#000">Y</text>
<text x="946.5" y="1026.6" font-family="Liberation Sans, sans-serif" font-weight="bold" font-size="9.5" text-anchor="middle" fill="#000">X</text>
</g><!--/CORNERAXIS-->
</svg><!--/VIEW-->
</div>
<!-- TASKBAR -->
<div id="task" class="abs">
<!--TASK-->
<svg class="abs" style="left:0;top:0;" width="957" height="47" viewBox="0 1030 957 47"><defs>
<linearGradient id="win" x1="0" y1="0" x2="1" y2="1"><stop offset="0" stop-color="#55c8ff"/><stop offset="1" stop-color="#0a74d2"/></linearGradient>
<linearGradient id="mailg" x1="0" y1="0" x2="0" y2="1"><stop offset="0" stop-color="#2a9bea"/><stop offset="1" stop-color="#1171c8"/></linearGradient>
<linearGradient id="fold" x1="0" y1="0" x2="0" y2="1"><stop offset="0" stop-color="#ffd858"/><stop offset="1" stop-color="#f5b91e"/></linearGradient>
<linearGradient id="edge" x1="0" y1="0" x2="1" y2="1"><stop offset="0" stop-color="#35c4e0"/><stop offset="0.5" stop-color="#1b8fd8"/><stop offset="1" stop-color="#0c59a4"/></linearGradient>
</defs>
<rect x="366" y="1035.5" width="38" height="37.5" rx="4" fill="#fafbfd" stroke="#e4e6ec" stroke-width="0.8"/>
<g transform="translate(21.0 1043.0)" ><path d="M0 0H11V11H0zM12.4 0H23.4V11H12.4zM0 12.4H11V23.4H0zM12.4 12.4H23.4V23.4H12.4z" fill="url(#win)"/></g>
<g transform="translate(64.0 1041.0)" ><circle cx="13.6" cy="10.8" r="8" fill="none" stroke="#1d1d1f" stroke-width="2.6"/><path d="M8.2 16.8L3.4 23" stroke="#1d1d1f" stroke-width="3" stroke-linecap="round"/></g>
<g transform="translate(108.0 1042.0)" ><rect x="7" y="1" width="18" height="15.6" rx="1.5" fill="#f7f7f7" stroke="#dcdcdc" stroke-width="0.6"/><rect x="1" y="7" width="18.4" height="16" rx="1.5" fill="#2b2b2b"/><path d="M7 7H19.4V16.6H7z" fill="#c8c8c8"/></g>
<g transform="translate(152.5 1041.5)" ><path d="M0.4 9.4L12.4 0.6L24.6 9.4V23H0.4z" fill="#0f5fb4"/><path d="M2.6 9.4H22.4V19H2.6z" fill="#f4f8fc"/><path d="M0.4 9.4L12.4 18L24.6 9.4V23.4H0.4z" fill="url(#mailg)"/><path d="M0.4 23.4L12.4 15.4L24.6 23.4z" fill="#3aa6f0" opacity="0.55"/></g>
<circle cx="208.4" cy="1054.0" r="11.8" fill="#fff"/><path d="M208.4 1054.0L198.2 1048.1A11.8 11.8 0 0 1 218.6 1048.1z" fill="#e33b2e"/><path d="M208.4 1054.0L218.6 1048.1A11.8 11.8 0 0 1 208.4 1065.8z" fill="#fcc934"/><path d="M208.4 1054.0L208.4 1065.8A11.8 11.8 0 0 1 198.2 1048.1z" fill="#2da94f"/><circle cx="208.4" cy="1054.0" r="5.5" fill="#fff"/><circle cx="208.4" cy="1054.0" r="4.4" fill="#1a73e8"/>
<circle cx="218.2" cy="1044.6" r="7.6" fill="#b9a58a"/><circle cx="218.2" cy="1043.6" r="3.6" fill="#e8c9a8"/><path d="M212 1049.6Q218.2 1045 224.4 1049.6Q222 1052 218.2 1052.2Q214.4 1052 212 1049.6z" fill="#6a7686"/><path d="M214.4 1042Q218 1037.6 222 1042Q220 1040.6 218.2 1040.6Q216.4 1040.6 214.4 1042z" fill="#8c7a64"/>
<circle cx="472.9" cy="1054.0" r="11.8" fill="#fff"/><path d="M472.9 1054.0L462.7 1048.1A11.8 11.8 0 0 1 483.1 1048.1z" fill="#e33b2e"/><path d="M472.9 1054.0L483.1 1048.1A11.8 11.8 0 0 1 472.9 1065.8z" fill="#fcc934"/><path d="M472.9 1054.0L472.9 1065.8A11.8 11.8 0 0 1 462.7 1048.1z" fill="#2da94f"/><circle cx="472.9" cy="1054.0" r="5.5" fill="#fff"/><circle cx="472.9" cy="1054.0" r="4.4" fill="#1a73e8"/>
<g transform="translate(240.5 1042.5)" ><path d="M0.4 3Q0.4 1 2.4 1H8.6L11 3.6H23Q25 3.6 25 5.6V20Q25 22 23 22H2.4Q0.4 22 0.4 20z" fill="#f0a81c"/><path d="M0.4 7.6Q0.4 6 2 6H23.4Q25 6 25 7.6V20.4Q25 22 23.4 22H2Q0.4 22 0.4 20.4z" fill="url(#fold)"/><path d="M5.4 15.4Q5.4 14 6.8 14H18.6Q20 14 20 15.4V22H5.4z" fill="#1f80d8"/><path d="M8.4 17.4H17V19H8.4z" fill="#0f5fb4"/></g>
<g transform="translate(285.0 1042.0)" ><circle cx="12" cy="12" r="11.8" fill="url(#edge)"/><path d="M2 15Q2.6 6.6 10.6 5.4Q18 5 20.6 10.4Q21.4 13.6 18.4 15H10.6Q10.6 12.4 13 11.4Q9.6 10.2 7 12.6Q4.6 15.4 6 19.2Q3 18.2 2 15z" fill="#eaf7fb"/><path d="M6 19.2Q9 23.4 15 22.6Q19.6 21.4 21.8 17.6Q17.6 20 13.4 18.6Q10.8 17.4 10.6 15Q7 14.4 6 19.2z" fill="#1468b8"/><path d="M0.4 12Q1 3 9.6 0.6Q18.6 -0.8 22.8 7.4Q20 3.4 14 3.6Q5 4.6 2 15Q0.6 14 0.4 12z" fill="#3bd0c8" opacity="0.85"/></g>
<g transform="translate(329.0 1042.0)" ><path d="M6.6 6.4Q7 1.6 12 1.4Q16.6 1.6 17.4 6Q22.6 6 23 11Q23.2 15.6 19 16.6Q18.4 22.4 12.4 22.6Q6.4 22.4 5.6 17Q0.8 16 1 11Q1.6 6.4 6.6 6.4z" fill="#fff" stroke="#e9a21c" stroke-width="1.6"/><path d="M6.6 6.4Q7 1.6 12 1.4Q16.6 1.6 17.4 6" fill="none" stroke="#4aa8e0" stroke-width="1.6"/><path d="M17.4 6Q22.6 6 23 11Q23.2 15.6 19 16.6" fill="none" stroke="#7ac143" stroke-width="1.6"/><path d="M19 16.6Q18.4 22.4 12.4 22.6Q6.4 22.4 5.6 17" fill="none" stroke="#e8452c" stroke-width="1.6"/></g>
<text x="341.2" y="1058.6" font-family="Liberation Serif, serif" font-style="italic" font-weight="bold" font-size="12.5" text-anchor="middle" fill="#7a3fa0">My</text>
<g transform="translate(372.0 1041.5)" ><path d="M0.6 1H14.6V6.4H6.4V10.6H12V15.6H6.4V24H0.6z" fill="#e0261c"/><path d="M0.6 1H2.4V24H0.6z" fill="#8c0c10"/><path d="M0.6 22.2H6.4V24H0.6z" fill="#8c0c10"/><path d="M6.4 6.4H14.6V7.6H6.4z" fill="#f08a1c"/><g transform="translate(16.8 15) scale(1.42)"><path d="M-1 -5.6H1L1.4 -4.2L2.6 -3.7L3.9 -4.5L5.2 -3.2L4.4 -1.9L4.9 -0.8L6.3 -0.4V1.4L4.9 1.8L4.4 3L5.2 4.2L3.9 5.5L2.6 4.8L1.4 5.3L1 6.6H-1L-1.4 5.3L-2.6 4.8L-3.9 5.5L-5.2 4.2L-4.4 3L-4.9 1.8L-6.3 1.4V-0.4L-4.9 -0.8L-4.4 -1.9L-5.2 -3.2L-3.9 -4.5L-2.6 -3.7L-1.4 -4.2z" fill="#2f5fb0" stroke="#16305c" stroke-width="0.5"/><circle cx="0" cy="0.5" r="2" fill="#fafbfd"/></g></g>
<g transform="translate(505.0 1042.5)" ><path d="M3 1H25V22.4H3z" fill="#5d5878"/><path d="M0.6 2.4H4V21H0.6z" fill="#f4f4f4"/><path d="M0.6 4h3.4M0.6 7h3.4M0.6 10h3.4M0.6 13h3.4M0.6 16h3.4M0.6 19h3.4" stroke="#9a9a9a" stroke-width="0.7"/><ellipse cx="16" cy="10.4" rx="7" ry="5.6" fill="#8f8a9c"/><circle cx="13.6" cy="9" r="1.9" fill="#f4f4f4"/><circle cx="18.8" cy="9.6" r="1.9" fill="#f4f4f4"/><circle cx="13.8" cy="9.2" r="0.8" fill="#111"/><circle cx="19" cy="9.8" r="0.8" fill="#111"/><path d="M19 13L25 15.6L19.6 15z" fill="#d8cfa8"/><path d="M9 3.6L12.4 6.4L8.6 7z" fill="#8f8a9c"/></g>
<rect x="161.9" y="1070.6" width="5.6" height="2.4" rx="1.2" fill="#8a8c94"/>
<rect x="205.8" y="1070.6" width="5.6" height="2.4" rx="1.2" fill="#8a8c94"/>
<rect x="250.2" y="1070.6" width="5.6" height="2.4" rx="1.2" fill="#8a8c94"/>
<rect x="338.3" y="1070.6" width="5.6" height="2.4" rx="1.2" fill="#8a8c94"/>
<rect x="426.1" y="1070.6" width="5.6" height="2.4" rx="1.2" fill="#8a8c94"/>
<rect x="470.0" y="1070.6" width="5.6" height="2.4" rx="1.2" fill="#8a8c94"/>
<rect x="513.8" y="1070.6" width="5.6" height="2.4" rx="1.2" fill="#8a8c94"/>
<rect x="377.6" y="1070.4" width="14.8" height="3" rx="1.5" fill="#0c78d4"/></svg>
<!--/TASK-->
</div>
<div class="abs" style="left:0;top:0;width:1px;height:1030px;background:#707070;"></div><div class="abs" style="left:1px;top:0;width:1px;height:1030px;background:#c8c8c8;opacity:0.6;"></div>
</body>
</html>
